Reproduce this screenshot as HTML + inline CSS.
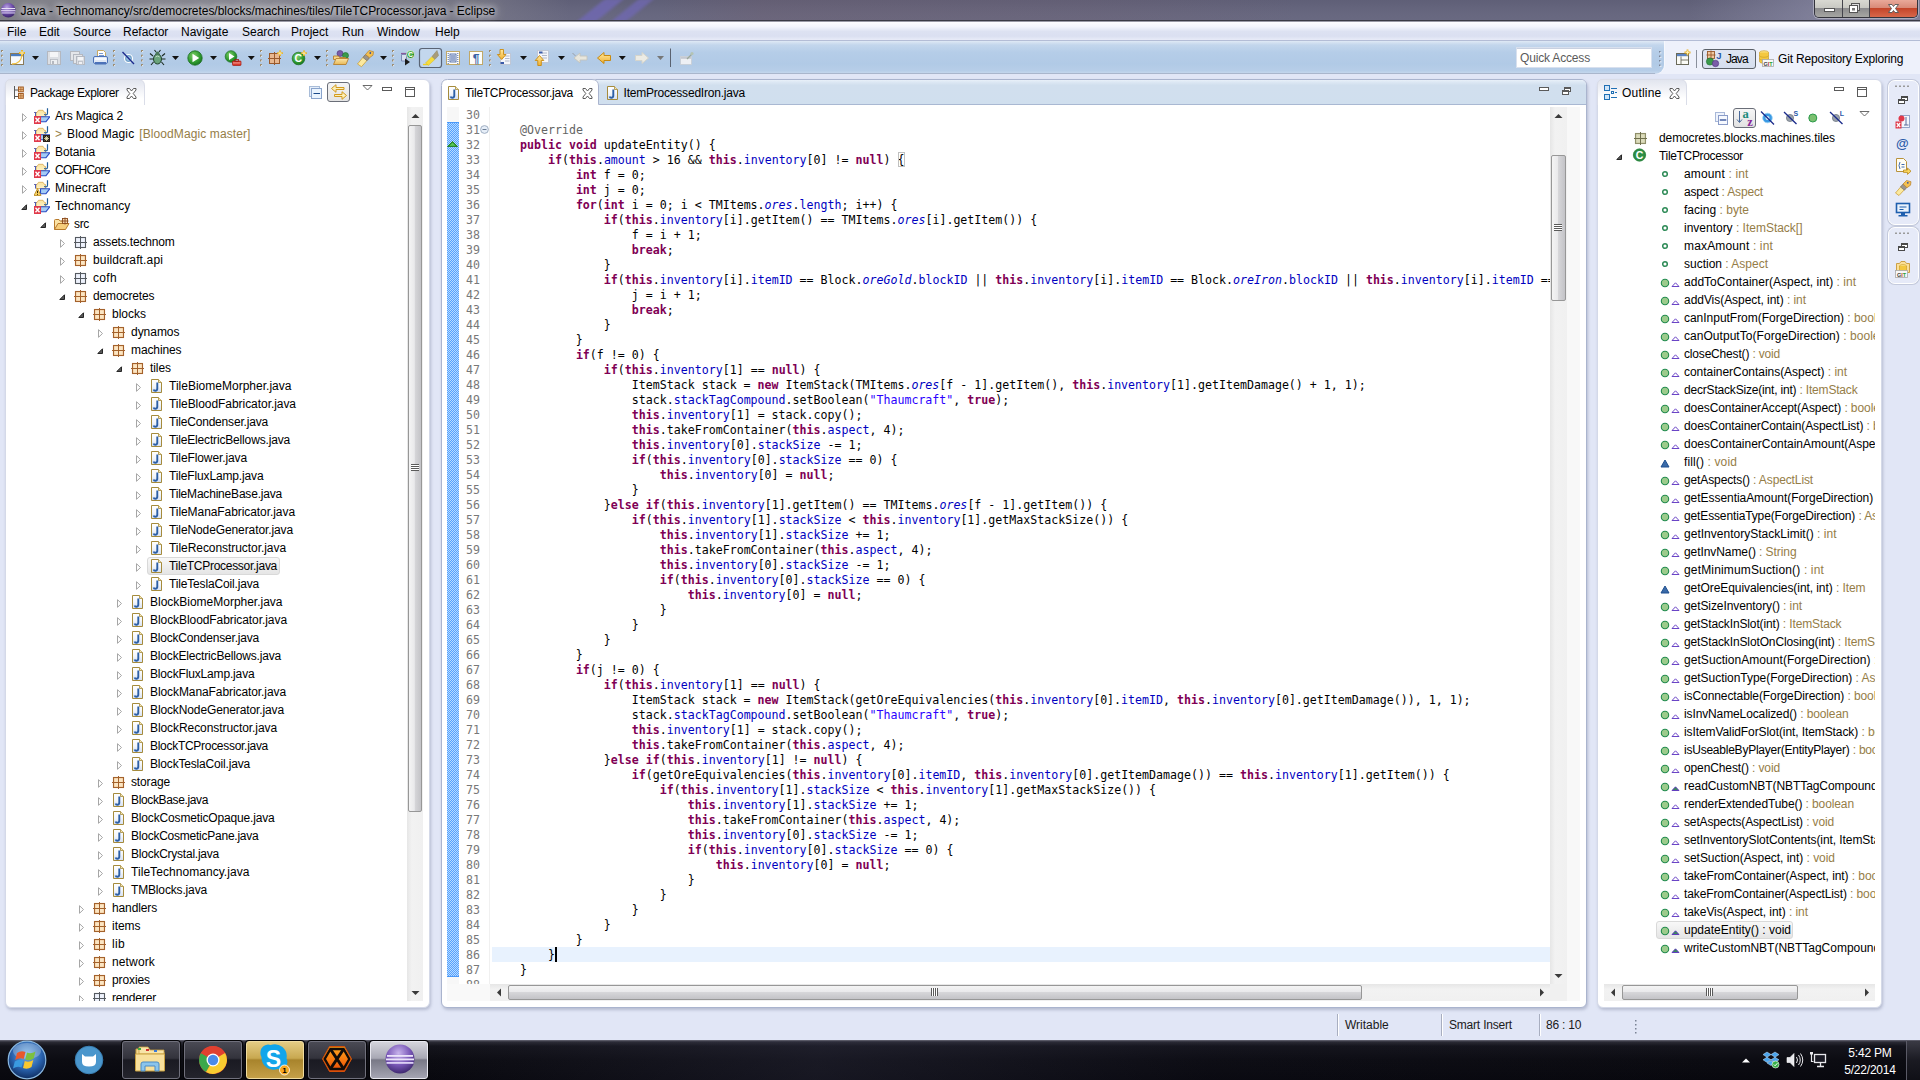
<!DOCTYPE html><html><head><meta charset="utf-8"><title>Java - Eclipse</title><style>
html,body{margin:0;padding:0}
body{width:1920px;height:1080px;overflow:hidden;background:#e1e6f6;font-family:"Liberation Sans",sans-serif;font-size:12px;color:#000;position:relative}
.a{position:absolute}
.t{position:absolute;white-space:nowrap;line-height:18px;height:18px}
.panel{position:absolute;background:#fff;border-radius:6px;box-sizing:border-box;border:1px solid #d4d9e8;box-shadow:1px 2px 3px rgba(125,130,160,.42)}
.clip{position:absolute;overflow:hidden}
.dec{color:#957d47}
.ty{color:#957d47}
.code{position:absolute;white-space:pre;font-family:"DejaVu Sans Mono","Liberation Mono",monospace;font-size:11.627px;line-height:15px;height:15px;color:#000}
.k{color:#7f0055;font-weight:bold}
.f{color:#0000c0}
.sf{color:#0000c0;font-style:italic}
.s{color:#2a00ff}
.an{color:#646464}
.ln{color:#787878}
.sbv{position:absolute;background:linear-gradient(90deg,#e6e6e6,#f2f2f2 30%,#f0f0f0)}
.thv{position:absolute;border:1px solid #979797;border-radius:2px;background:linear-gradient(90deg,#f4f4f4,#e9e9eb 45%,#d6d6d9 50%,#c3c3c7);box-sizing:border-box}
.sbh{position:absolute;background:linear-gradient(180deg,#e6e6e6,#f2f2f2 30%,#f0f0f0)}
.thh{position:absolute;border:1px solid #979797;border-radius:2px;background:linear-gradient(180deg,#f4f4f4,#e9e9eb 45%,#d6d6d9 50%,#c3c3c7);box-sizing:border-box}
.sel{position:absolute;border:1px solid #d9d9d9;border-radius:3px;background:linear-gradient(180deg,#f8f8f8,#e5e5e5);box-sizing:border-box}
</style></head><body>
<svg class="a" style="left:0;top:0" width="0" height="0"><defs><linearGradient id="jf" x1="0" y1="0" x2="0" y2="1"><stop offset="0" stop-color="#fff"/><stop offset=".5" stop-color="#f4f7fc"/><stop offset="1" stop-color="#d4e0f4"/></linearGradient><linearGradient id="tabg" x1="0" y1="0" x2="0" y2="1"><stop offset="0" stop-color="#e1e4ee"/><stop offset=".75" stop-color="#fff"/><stop offset="1" stop-color="#fff"/></linearGradient></defs></svg>
<div class="a" style="left:0;top:0;width:1920px;height:22px;overflow:hidden;background:linear-gradient(90deg,rgba(128,128,136,.95) 0,rgba(140,140,148,.9) 250px,rgba(125,125,138,.6) 480px,rgba(110,110,130,0) 570px),linear-gradient(90deg,rgba(150,150,178,0) 1690px,rgba(150,150,178,.5) 1815px),linear-gradient(90deg,rgba(120,90,100,0) 660px,rgba(120,90,100,.18) 760px,rgba(120,90,100,.12) 1100px,rgba(120,90,100,0) 1300px),linear-gradient(180deg,#5f5f77 0,#66667e 50%,#6a6a82 100%)"><div class="a" style="left:590px;top:-2px;width:19px;height:26px;background:#7068b4;opacity:.8;transform:skewX(-51deg);filter:blur(2px)"></div><div class="a" style="left:624px;top:-2px;width:15px;height:26px;background:#7068b4;opacity:.75;transform:skewX(-51deg);filter:blur(2px)"></div></div>
<div class="a" style="left:0;top:20px;width:1920px;height:1px;background:#3a3a44"></div>
<div class="a" style="left:0;top:21px;width:1920px;height:1px;background:#9a9aa6"></div>
<svg class="a" style="left:0px;top:2px" width="17" height="17" viewBox="0 0 17 17" ><defs><radialGradient id="eg" cx=".4" cy=".3" r=".8"><stop offset="0" stop-color="#b9a3e0"/><stop offset=".5" stop-color="#6b4aa8"/><stop offset="1" stop-color="#2c1a5a"/></radialGradient></defs><circle cx="8.300" cy="8.300" r="7.300" fill="url(#eg)"/><rect x="1.500" y="6" width="13.600" height="1.100" fill="#e8e0f8"/><rect x="1.100" y="8.200" width="14.400" height="1.100" fill="#e8e0f8"/><rect x="1.500" y="10.400" width="13.600" height="1.100" fill="#d8cdf0"/></svg>
<div class="t" style="left:20.500px;top:2px;height:19px;line-height:19px;letter-spacing:-.04px;text-shadow:0 0 6px rgba(255,255,255,.9),0 0 10px rgba(255,255,255,.7),0 0 14px rgba(255,255,255,.5)">Java - Technomancy/src/democretes/blocks/machines/tiles/TileTCProcessor.java - Eclipse</div>
<div class="a" style="left:1814px;top:0;width:104px;height:18px;border:1px solid #33333c;border-top:none;border-radius:0 0 5px 5px;box-sizing:border-box;overflow:hidden;box-shadow:0 0 0 1px rgba(255,255,255,.35)"><div class="a" style="left:0;top:0;width:27px;height:17px;background:linear-gradient(180deg,#d9d9d2 0,#c9c9c3 45%,#8c8c8e 50%,#a6a6a2 100%);border-right:1px solid #44444c"></div><div class="a" style="left:28px;top:0;width:26px;height:17px;background:linear-gradient(180deg,#d9d9d2 0,#c9c9c3 45%,#8c8c8e 50%,#a6a6a2 100%);border-right:1px solid #44444c"></div><div class="a" style="left:55px;top:0;width:48px;height:17px;background:linear-gradient(180deg,#e9a99a 0,#d98a78 45%,#c4452a 50%,#d8674a 100%)"></div></div>
<svg class="a" style="left:1814px;top:0px" width="104" height="18" viewBox="0 0 104 18" ><rect x="10.5" y="8.5" width="10" height="3" fill="#fff" stroke="#555" stroke-width="1"/><rect x="37.500" y="3.5" width="8" height="7" fill="#ddd" stroke="#555" stroke-width="1"/><rect x="35.5" y="5.5" width="8" height="7" fill="#fff" stroke="#555" stroke-width="1"/><rect x="38" y="8" width="3" height="2.500" fill="#777"/><path d="M74.5 4.500 L78 4.500 L79.500 6.500 L81 4.500 L84.500 4.500 L81.500 8.500 L84.500 12.500 L81 12.500 L79.500 10.500 L78 12.500 L74.500 12.500 L77.500 8.500 Z" fill="#fff" stroke="#555" stroke-width=".9"/></svg>
<div class="a" style="left:0;top:22px;width:1920px;height:19px;background:linear-gradient(180deg,#fdfdff 0,#f3f5fc 25%,#dde2f2 50%,#dbe0f1 75%,#eceffa 100%)"></div>
<div class="a" style="left:0;top:40px;width:1920px;height:1px;background:#b4bdd6"></div>
<div class="t" style="left:7px;top:23px">File</div>
<div class="t" style="left:39px;top:23px">Edit</div>
<div class="t" style="left:73px;top:23px">Source</div>
<div class="t" style="left:123px;top:23px">Refactor</div>
<div class="t" style="left:181px;top:23px">Navigate</div>
<div class="t" style="left:242px;top:23px">Search</div>
<div class="t" style="left:291px;top:23px">Project</div>
<div class="t" style="left:342px;top:23px">Run</div>
<div class="t" style="left:377px;top:23px">Window</div>
<div class="t" style="left:435px;top:23px">Help</div>
<div class="a" style="left:0;top:41px;width:1920px;height:37px;background:#eef1fb"></div>
<div class="a" style="left:0;top:41px;width:1664px;height:33px;border-radius:0 0 9px 0;background:linear-gradient(180deg,#dfe9f5 0,#c3d6ec 12%,#b5cde8 35%,#b1cae6 70%,#b7cee8 90%,#c9daee 100%);box-shadow:1px 0 0 #f6f8fd"></div>
<div class="a" style="left:0;top:73px;width:1655px;height:1px;background:#a9b6cc"></div>
<div class="a" style="left:0;top:74px;width:1920px;height:6px;background:#e1e6f6"></div>
<svg class="a" style="left:0px;top:41px" width="720" height="33" viewBox="0 0 720 33" ><g transform="translate(0,-41)"><defs><linearGradient id="gy" x1="0" y1="0" x2="0" y2="1"><stop offset="0" stop-color="#ffe9a0"/><stop offset="1" stop-color="#f0b030"/></linearGradient><radialGradient id="gg" cx=".4" cy=".35" r=".75"><stop offset="0" stop-color="#7fd06a"/><stop offset=".6" stop-color="#2f9a2f"/><stop offset="1" stop-color="#136b1a"/></radialGradient><linearGradient id="gf" x1="0" y1="0" x2="0" y2="1"><stop offset="0" stop-color="#fbe6a8"/><stop offset="1" stop-color="#e8b858"/></linearGradient></defs><rect x="1" y="50.0" width="2" height="2" fill="#9c8a6c"/><rect x="2" y="51.0" width="1.2" height="1.2" fill="#e8edf6"/><rect x="1" y="54.7" width="2" height="2" fill="#9c8a6c"/><rect x="2" y="55.7" width="1.2" height="1.2" fill="#e8edf6"/><rect x="1" y="59.4" width="2" height="2" fill="#9c8a6c"/><rect x="2" y="60.4" width="1.2" height="1.2" fill="#e8edf6"/><rect x="1" y="64.1" width="2" height="2" fill="#9c8a6c"/><rect x="2" y="65.1" width="1.2" height="1.2" fill="#e8edf6"/><rect x="113" y="50.0" width="2" height="2" fill="#9c8a6c"/><rect x="114" y="51.0" width="1.2" height="1.2" fill="#e8edf6"/><rect x="113" y="54.7" width="2" height="2" fill="#9c8a6c"/><rect x="114" y="55.7" width="1.2" height="1.2" fill="#e8edf6"/><rect x="113" y="59.4" width="2" height="2" fill="#9c8a6c"/><rect x="114" y="60.4" width="1.2" height="1.2" fill="#e8edf6"/><rect x="113" y="64.1" width="2" height="2" fill="#9c8a6c"/><rect x="114" y="65.1" width="1.2" height="1.2" fill="#e8edf6"/><rect x="141" y="50.0" width="2" height="2" fill="#9c8a6c"/><rect x="142" y="51.0" width="1.2" height="1.2" fill="#e8edf6"/><rect x="141" y="54.7" width="2" height="2" fill="#9c8a6c"/><rect x="142" y="55.7" width="1.2" height="1.2" fill="#e8edf6"/><rect x="141" y="59.4" width="2" height="2" fill="#9c8a6c"/><rect x="142" y="60.4" width="1.2" height="1.2" fill="#e8edf6"/><rect x="141" y="64.1" width="2" height="2" fill="#9c8a6c"/><rect x="142" y="65.1" width="1.2" height="1.2" fill="#e8edf6"/><rect x="260" y="50.0" width="2" height="2" fill="#9c8a6c"/><rect x="261" y="51.0" width="1.2" height="1.2" fill="#e8edf6"/><rect x="260" y="54.7" width="2" height="2" fill="#9c8a6c"/><rect x="261" y="55.7" width="1.2" height="1.2" fill="#e8edf6"/><rect x="260" y="59.4" width="2" height="2" fill="#9c8a6c"/><rect x="261" y="60.4" width="1.2" height="1.2" fill="#e8edf6"/><rect x="260" y="64.1" width="2" height="2" fill="#9c8a6c"/><rect x="261" y="65.1" width="1.2" height="1.2" fill="#e8edf6"/><rect x="326" y="50.0" width="2" height="2" fill="#9c8a6c"/><rect x="327" y="51.0" width="1.2" height="1.2" fill="#e8edf6"/><rect x="326" y="54.7" width="2" height="2" fill="#9c8a6c"/><rect x="327" y="55.7" width="1.2" height="1.2" fill="#e8edf6"/><rect x="326" y="59.4" width="2" height="2" fill="#9c8a6c"/><rect x="327" y="60.4" width="1.2" height="1.2" fill="#e8edf6"/><rect x="326" y="64.1" width="2" height="2" fill="#9c8a6c"/><rect x="327" y="65.1" width="1.2" height="1.2" fill="#e8edf6"/><rect x="392" y="50.0" width="2" height="2" fill="#9c8a6c"/><rect x="393" y="51.0" width="1.2" height="1.2" fill="#e8edf6"/><rect x="392" y="54.7" width="2" height="2" fill="#9c8a6c"/><rect x="393" y="55.7" width="1.2" height="1.2" fill="#e8edf6"/><rect x="392" y="59.4" width="2" height="2" fill="#9c8a6c"/><rect x="393" y="60.4" width="1.2" height="1.2" fill="#e8edf6"/><rect x="392" y="64.1" width="2" height="2" fill="#9c8a6c"/><rect x="393" y="65.1" width="1.2" height="1.2" fill="#e8edf6"/><rect x="489" y="50.0" width="2" height="2" fill="#9c8a6c"/><rect x="490" y="51.0" width="1.2" height="1.2" fill="#e8edf6"/><rect x="489" y="54.7" width="2" height="2" fill="#9c8a6c"/><rect x="490" y="55.7" width="1.2" height="1.2" fill="#e8edf6"/><rect x="489" y="59.4" width="2" height="2" fill="#9c8a6c"/><rect x="490" y="60.4" width="1.2" height="1.2" fill="#e8edf6"/><rect x="489" y="64.1" width="2" height="2" fill="#9c8a6c"/><rect x="490" y="65.1" width="1.2" height="1.2" fill="#e8edf6"/><path d="M32.0 56 h7 l-3.500 4 Z" fill="#111"/><path d="M172.0 56 h7 l-3.500 4 Z" fill="#111"/><path d="M210.0 56 h7 l-3.500 4 Z" fill="#111"/><path d="M247.8 56 h7 l-3.500 4 Z" fill="#111"/><path d="M314.0 56 h7 l-3.500 4 Z" fill="#111"/><path d="M380.0 56 h7 l-3.500 4 Z" fill="#111"/><path d="M520.0 56 h7 l-3.500 4 Z" fill="#111"/><path d="M558.0 56 h7 l-3.500 4 Z" fill="#111"/><path d="M618.8 56 h7 l-3.500 4 Z" fill="#111"/><path d="M657.0 56 h7 l-3.500 4 Z" fill="#777"/><rect x="10.5" y="53.5" width="13" height="11" fill="#f7fafe" stroke="#8a7a58"/><rect x="11" y="54" width="12" height="2.200" fill="#4a7cc0"/><path d="M12 64 q9 0 10 -9" stroke="#f0c040" stroke-width="1.300" fill="none"/><path d="M22 50 v6 M19 53 h6" stroke="#e8b020" stroke-width="1.800"/><path d="M22 51 v4 M20 53 h4" stroke="#fff6c0" stroke-width=".8"/><rect x="47.5" y="51.5" width="13" height="13" fill="#dcdfe4" stroke="#b4b8c0"/><rect x="50" y="52" width="8" height="5" fill="#f4f5f7"/><rect x="50.5" y="59.5" width="7" height="5" fill="#eceef1" stroke="#b4b8c0" stroke-width=".8"/><rect x="52" y="61" width="2" height="3" fill="#b4b8c0"/><rect x="70.5" y="51.5" width="9" height="9" fill="#e4e6ea" stroke="#b4b8c0"/><rect x="73.500" y="54.5" width="9" height="9" fill="#e4e6ea" stroke="#b4b8c0"/><rect x="76.500" y="56.5" width="8" height="8" fill="#dcdfe4" stroke="#b4b8c0"/><rect x="78" y="57" width="5" height="3" fill="#f4f5f7"/><rect x="78.500" y="61.5" width="4" height="3" fill="#f0f1f4" stroke="#b4b8c0" stroke-width=".7"/><path d="M97.500 50.5 h6 l2 2 v5 h-8 Z" fill="#fdfdfd" stroke="#c8a860"/><path d="M99 53.500 h4 M99 55.500 h5" stroke="#6a8cc8" stroke-width=".9"/><rect x="93.500" y="56.5" width="14" height="7" rx="1.500" fill="#dfe8f6" stroke="#4c72b8"/><rect x="95" y="62" width="11" height="2.500" fill="#4c72b8"/><rect x="95" y="58" width="11" height="2" fill="#f6f9fe"/><circle cx="128.5" cy="58.5" r="4" fill="#6f9fc8" stroke="#fff" stroke-width="1.200"/><circle cx="128.5" cy="58.5" r="2.200" fill="#9cc4e4"/><path d="M122.5 52 L134 64" stroke="#1c2a8c" stroke-width="1.300"/><ellipse cx="157.5" cy="59" rx="4" ry="5" fill="#6aa47c" stroke="#1f4028" stroke-width="1"/><circle cx="157.5" cy="53.500" r="2" fill="#4a7858"/><path d="M153 56 l-3 -2.500 M162 56 l3 -2.500 M153 59 h-3.500 M162 59 h3.500 M153.500 62 l-2.500 3 M161.500 62 l2.500 3 M156 52 l-1.500 -2 M159 52 l1.500 -2" stroke="#1a2a20" stroke-width="1.100" fill="none"/><path d="M155.500 57 q2 -2 4 0" stroke="#cfe8d0" stroke-width=".8" fill="none"/><circle cx="195" cy="58" r="7.200" fill="url(#gg)" stroke="#1a6e22" stroke-width=".8"/><path d="M192.500 53.800 L199.200 58 L192.500 62.200 Z" fill="#fff"/><circle cx="231" cy="56.500" r="5.800" fill="url(#gg)" stroke="#1a6e22" stroke-width=".7"/><path d="M229 53 L234.500 56.500 L229 60 Z" fill="#fff"/><rect x="232.5" y="61" width="8.500" height="4.500" rx=".8" fill="#d8382c" stroke="#a01810" stroke-width=".7"/><rect x="235" y="59.500" width="3.500" height="1.800" fill="none" stroke="#a01810" stroke-width=".8"/><rect x="233" y="62.500" width="7.500" height=".9" fill="#f8b0a8"/><rect x="269.5" y="53.5" width="10" height="10" fill="#e8b890" stroke="#9a5a2c"/><path d="M274.500 52 v13 M268 58.500 h13" stroke="#9a5a2c" stroke-width="1"/><path d="M280 50.500 v5.500 M277.200 53.200 h5.600" stroke="#e8b020" stroke-width="1.800"/><path d="M280 51.500 v3.500 M278.200 53.200 h3.600" stroke="#fff6c0" stroke-width=".8"/><circle cx="298.5" cy="58.5" r="6.300" fill="url(#gg)" stroke="#1a6e22" stroke-width=".7"/><text x="298.300" y="62.400" font-family="Liberation Sans,sans-serif" font-weight="bold" font-size="10.500" fill="#fff" text-anchor="middle">C</text><path d="M304 50.500 v5.500 M301.200 53.200 h5.600" stroke="#e8b020" stroke-width="1.800"/><path d="M304 51.500 v3.500 M302.200 53.200 h3.600" stroke="#fff6c0" stroke-width=".8"/><circle cx="340" cy="53.500" r="3" fill="#7a5ca8" stroke="#4a3478" stroke-width=".6"/><circle cx="345.5" cy="55.500" r="3" fill="#3a9a4a" stroke="#1a6a2a" stroke-width=".6"/><path d="M333.500 56 h5 l1 1.500 h6 v2 h-12 Z" fill="#f4d488" stroke="#b8802c" stroke-width=".9"/><path d="M333.500 64.500 l2.500 -6 h12.500 l-2.500 6 Z" fill="url(#gf)" stroke="#b8802c" stroke-width=".9"/><path d="M357.500 64 l7 -8.500 4 3.200 -7 8 Z" fill="#fbe9a0" stroke="#c89828" stroke-width=".7"/><path d="M363 57.500 l2.500 -3 4 3.200 -2.500 3 Z" fill="#9a948c" stroke="#6a645c" stroke-width=".6"/><path d="M365.500 54.500 l3.500 -4 4.500 1.200 -.5 3.500 -3.500 2.500 Z" fill="#f4c050" stroke="#b8802c" stroke-width=".7"/><circle cx="370.3" cy="53" r=".9" fill="#3050a0"/><path d="M401.500 54.500 h5 v6.500 h-5 Z" fill="#d8dff0" stroke="#6a78a8" stroke-width=".8"/><path d="M401 53.500 h6" stroke="#8a5a9a" stroke-width="1.200"/><circle cx="410.5" cy="54.500" r="4" fill="url(#gg)" stroke="#fff" stroke-width=".7"/><text x="410.500" y="57.200" font-family="Liberation Sans,sans-serif" font-weight="bold" font-size="7" fill="#fff" text-anchor="middle">C</text><path d="M405 58.500 l5 3.500 -5 3.500 Z" fill="#1a1a1a"/><rect x="419.5" y="48.500" width="22" height="19" rx="2.500" fill="#c3d7ee" stroke="#5a6474" stroke-width="1.200"/><path d="M423 64.500 h6" stroke="#f0d020" stroke-width="1.400"/><path d="M425.500 63 l6.500 -6.500 3 2.800 -6.500 6 Z" fill="#f6dc3c" stroke="#d8b820" stroke-width=".5"/><path d="M432 56.500 l5 -6 1.500 5 -3.500 3.800 Z" fill="#a89c78" stroke="#8a8060" stroke-width=".5"/><rect x="446.5" y="51.5" width="13" height="13" fill="#fdfdfb" stroke="#c0a868"/><rect x="450" y="54" width="6" height="8" fill="#e4ecf8" stroke="#3a5a9c" stroke-width=".8"/><path d="M451 56 h4 M451 58 h4 M451 60 h4" stroke="#3a5a9c" stroke-width=".9"/><path d="M448.200 53 v11 M457.800 53 v11" stroke="#3a5a9c" stroke-width=".9" stroke-dasharray="1 1"/><rect x="469.5" y="51.5" width="13" height="13" fill="#fdfdfb" stroke="#c0a868"/><text x="476.200" y="63.300" font-family="Liberation Sans,sans-serif" font-weight="bold" font-size="12" fill="#3a62a8" text-anchor="middle">¶</text><path d="M500.500 53.500 h10 v11 h-10 Z" fill="#f4f6fa" stroke="#b8bcc8" stroke-width=".7"/><path d="M505 56 h4.500 M505 58.500 h4.500 M505 61 h4.500" stroke="#a8b0c4" stroke-width=".9"/><rect x="500.5" y="62" width="3.500" height="2" fill="#3a5aa8"/><path d="M500 49.500 h3.500 v5 h2.500 l-4.300 5 -4.300 -5 h2.600 Z" fill="url(#gy)" stroke="#c88a10" stroke-width=".9"/><path d="M537.500 50.500 h11 v12 h-11 Z" fill="#f4f6fa" stroke="#b8bcc8" stroke-width=".7"/><path d="M542 53 h5 M542 55.500 h5 M542 58 h5" stroke="#a8b0c4" stroke-width=".9"/><rect x="539" y="51.500" width="3.500" height="2" fill="#3a5aa8"/><path d="M537.800 65.500 h3.500 v-5 h2.500 l-4.300 -5 -4.300 5 h2.600 Z" fill="url(#gy)" stroke="#c88a10" stroke-width=".9"/><path d="M574 58 l6 -5 v3 h7 v4 h-7 v3 Z" fill="#e8e6dc" stroke="#c4c4bc" stroke-width=".9"/><path d="M572.500 53 l3 3" stroke="#9aa0a8" stroke-width="1"/><path d="M597.500 58 l6.500 -5.500 v3 h6.500 v5 h-6.500 v3 Z" fill="url(#gy)" stroke="#c88a10" stroke-width="1"/><path d="M648.500 58 l-6.500 -5.500 v3 h-6.500 v5 h6.500 v3 Z" fill="#ecebe4" stroke="#d4d4cc" stroke-width="1"/><rect x="670" y="48.500" width="1" height="18.500" fill="#5a6270"/><rect x="680.5" y="56.500" width="11" height="8" fill="#eef0f4" stroke="#c8ccd4" stroke-width=".8"/><rect x="681" y="57" width="10" height="1.800" fill="#c4c8d0"/><path d="M687 59 l5 -5" stroke="#9aa89a" stroke-width="1.300"/><circle cx="692" cy="53.500" r="1.600" fill="#b4c4b4"/></g></svg>
<div class="a" style="left:1516px;top:47px;width:136px;height:21px;background:#fff;border:1px solid #d8e0ee;box-sizing:border-box;box-shadow:inset 0 1px 0 #c8d0e0"></div>
<div class="t" style="left:1520px;top:49px;color:#5a5a5a;line-height:19px;height:19px;letter-spacing:-.17px">Quick Access</div>
<svg class="a" style="left:1655px;top:41px" width="12" height="33" viewBox="0 0 12 33" ><rect x="4" y="10" width="1.500" height="1.500" fill="#7a8294"/><rect x="5.200" y="11.2" width="1.200" height="1.200" fill="#f4f6fc"/><rect x="4" y="14.5" width="1.500" height="1.500" fill="#7a8294"/><rect x="5.200" y="15.7" width="1.200" height="1.200" fill="#f4f6fc"/><rect x="4" y="19" width="1.500" height="1.500" fill="#7a8294"/><rect x="5.200" y="20.2" width="1.200" height="1.200" fill="#f4f6fc"/><rect x="4" y="23.5" width="1.500" height="1.500" fill="#7a8294"/><rect x="5.200" y="24.7" width="1.200" height="1.200" fill="#f4f6fc"/></svg>
<svg class="a" style="left:1675px;top:49px" width="18" height="18" viewBox="0 0 18 18" ><rect x="1.500" y="4.500" width="12" height="11" fill="#fbfbf6" stroke="#6a6a5a"/><rect x="2" y="5" width="11" height="2.200" fill="#5a84c4"/><path d="M6 7.500 v8 M6 11 h7.500" stroke="#6a6a5a" stroke-width=".9"/><path d="M12.500 0.500 v6 M9.500 3.500 h6" stroke="#e8b020" stroke-width="1.800"/><path d="M12.500 1.500 v4 M10.500 3.500 h4" stroke="#fff6c0" stroke-width=".8"/></svg>
<div class="a" style="left:1696px;top:50px;width:1px;height:18px;background:#8a909c"></div>
<div class="a" style="left:1702px;top:49px;width:54px;height:20px;border:1px solid #5a6068;border-radius:3px;box-sizing:border-box;background:linear-gradient(180deg,#dfe5f2,#d6deee)"></div>
<svg class="a" style="left:1705px;top:50px" width="18" height="18" viewBox="0 0 18 18" ><rect x="2.500" y="1.500" width="7" height="7" fill="#f0c8a0" stroke="#9a5a2c" stroke-width=".9"/><path d="M6 0.500 v9 M1.500 5 h9" stroke="#9a5a2c" stroke-width=".9"/><circle cx="5" cy="11.500" r="3.600" fill="#3a9a4a" stroke="#1a6a2a" stroke-width=".6"/><circle cx="10.500" cy="13.500" r="3.200" fill="#7a5ca8" stroke="#4a3478" stroke-width=".6"/><text x="13.800" y="8.500" font-family="Liberation Sans,sans-serif" font-weight="bold" font-size="9.500" fill="#2a5aa8" text-anchor="middle">J</text></svg>
<div class="t" style="left:1726px;top:50px;letter-spacing:-.9px">Java</div>
<svg class="a" style="left:1757px;top:49px" width="18" height="20" viewBox="0 0 18 20" ><ellipse cx="7" cy="3.500" rx="4.500" ry="1.800" fill="#fbe080" stroke="#c89820" stroke-width=".6"/><path d="M2.500 3.500 v9 a4.500 1.800 0 0 0 9 0 v-9" fill="#f4c840" stroke="#c89820" stroke-width=".6"/><path d="M2.500 6.500 a4.500 1.800 0 0 0 9 0 M2.500 9.500 a4.500 1.800 0 0 0 9 0" fill="none" stroke="#c89820" stroke-width=".6"/><rect x="5.500" y="10.500" width="11" height="7" fill="#f8f8f8" stroke="#a8a8a8" stroke-width=".8"/><text x="11" y="16.500" font-family="Liberation Sans,sans-serif" font-weight="bold" font-size="5.500" text-anchor="middle"><tspan fill="#404040">G</tspan><tspan fill="#c03030">I</tspan><tspan fill="#30a030">T</tspan></text></svg>
<div class="t" style="left:1778px;top:50px;letter-spacing:-.17px">Git Repository Exploring</div>
<div class="panel" style="left:5px;top:79px;width:425px;height:929px"></div>
<svg class="a" style="left:5px;top:79px" width="150" height="26" viewBox="0 0 150 26" ><path d="M0.500 26 V6 Q0.500 0.500 6 0.500 H133 Q139.500 0.500 139.500 7 V26" fill="url(#tabg)" stroke="#dadde8" stroke-width="1"/></svg>
<svg class="a" style="left:13px;top:84px" width="16" height="16" viewBox="0 0 16 16" ><path d="M1.500 2 v13 M1.500 6 h4 M1.500 12.500 h4" stroke="#5a5a5a" stroke-width="1" fill="none"/><rect x="5.500" y="3" width="4.800" height="4.800" fill="#f4c890" stroke="#a05a24" stroke-width="1"/><path d="M7.900 3 v4.800 M5.500 5.400 h4.800" stroke="#a05a24" stroke-width=".7"/><rect x="5.500" y="9.500" width="4.800" height="4.800" fill="#f4c890" stroke="#a05a24" stroke-width="1"/><path d="M7.900 9.500 v4.800 M5.500 11.900 h4.800" stroke="#a05a24" stroke-width=".7"/></svg>
<div class="t" style="left:30px;top:84px;letter-spacing:-.38px">Package Explorer</div>
<svg class="a" style="left:126px;top:88px" width="11" height="11" viewBox="0 0 11 11" ><path d="M1 0.500 h2.500 l2 2.500 l2 -2.500 h2.500 v1.500 l-2.800 3.500 l2.800 3.500 v1.500 h-2.500 l-2 -2.500 l-2 2.500 h-2.500 v-1.500 l2.800 -3.500 l-2.800 -3.500 Z" fill="#fff" stroke="#4a4a4a" stroke-width=".9"/></svg>
<svg class="a" style="left:306px;top:85px" width="18" height="16" viewBox="0 0 18 16" ><rect x="3.500" y="1.500" width="10" height="10" fill="#e4eefa" stroke="#a8bcd8" stroke-width="1"/><rect x="5.500" y="3.500" width="10" height="10" fill="#eaf4fe" stroke="#8aa4cc" stroke-width="1"/><path d="M7.500 8.500 h6.500" stroke="#1a4a8a" stroke-width="1"/></svg>
<div class="a" style="left:327px;top:82px;width:23px;height:20px;border:1px solid #6a6e78;border-radius:3px;box-sizing:border-box;background:linear-gradient(180deg,#f4f4f4,#e4e4e4)"></div>
<svg class="a" style="left:330px;top:83px" width="18" height="18" viewBox="0 0 18 18" ><path d="M1.500 5.500 l4.500 -3.800 v2.800 h8 v2 h-8 v2.800 Z" fill="#fdf0b8" stroke="#d29a1e" stroke-width="1" stroke-linejoin="round"/><path d="M16.500 12.500 l-4.500 -3.800 v2.800 h-7.500 v2 h7.500 v2.800 Z" fill="#fdf0b8" stroke="#d29a1e" stroke-width="1" stroke-linejoin="round"/></svg>
<svg class="a" style="left:361.5px;top:83.5px" width="12" height="8" viewBox="0 0 12 8" ><path d="M1 1.500 h9 l-4.500 4.500 Z" fill="#fff" stroke="#5a5a5a" stroke-width=".9"/></svg>
<svg class="a" style="left:382px;top:87px" width="12" height="6" viewBox="0 0 12 6" ><rect x="0.500" y="0.500" width="9" height="3" fill="#fff" stroke="#5a5a5a" stroke-width="1"/></svg>
<svg class="a" style="left:405px;top:87px" width="12" height="12" viewBox="0 0 12 12" ><rect x="0.500" y="0.500" width="9" height="9" fill="#fff" stroke="#5a5a5a" stroke-width="1"/><path d="M0.500 2.500 h9" stroke="#5a5a5a" stroke-width="1"/></svg>
<div class="clip" style="left:12px;top:107px;width:394px;height:894px">
<svg class="a" style="left:10px;top:6px" width="6" height="10" viewBox="0 0 6 10" ><path d="M0.500 0.700 V8.300 L4.500 4.500 Z" fill="#fff" stroke="#a6a6a6" stroke-width="1" stroke-linejoin="round"/></svg>
<svg class="a" style="left:22px;top:1px" width="16" height="16" viewBox="0 0 16 16" ><path d="M2 4.500 h1 l1.500 -2.200 h4.500 l1.500 2.200 h1 v4 h-9.500 Z" fill="#fbe7a8" stroke="#d8a850" stroke-width=".8"/><path d="M3 6 h8 M3 7.500 h8" stroke="#fdf3cf" stroke-width=".7"/><path d="M0 4.500 h2.500" stroke="#6a6aa8" stroke-width="1"/><path d="M1.500 4.500 v4" stroke="#4a5ab8" stroke-width="1"/><path d="M6.500 8.700 H16 L12 13.700 H6.500 Z" fill="#a4ccf6" stroke="#2a4cc4" stroke-width="1.100" stroke-linejoin="round"/><path d="M13.500 0.300 v5 q0 1.700 -1.700 1.700 q-1 0 -1.300 -1" fill="none" stroke="#1f5c99" stroke-width="1.200"/><rect x="0" y="8" width="7" height="8" fill="#e0394a"/><path d="M1.500 9.800 l4 4.500 M5.500 9.800 l-4 4.500" stroke="#fff" stroke-width="1.400"/></svg>
<div class="t" style="left:43px;top:0px;letter-spacing:-0.169px;">Ars Magica 2</div>
<svg class="a" style="left:10px;top:24px" width="6" height="10" viewBox="0 0 6 10" ><path d="M0.500 0.700 V8.300 L4.500 4.500 Z" fill="#fff" stroke="#a6a6a6" stroke-width="1" stroke-linejoin="round"/></svg>
<svg class="a" style="left:22px;top:19px" width="16" height="16" viewBox="0 0 16 16" ><path d="M2 4.500 h1 l1.500 -2.200 h4.500 l1.500 2.200 h1 v4 h-9.500 Z" fill="#fbe7a8" stroke="#d8a850" stroke-width=".8"/><path d="M3 6 h8 M3 7.500 h8" stroke="#fdf3cf" stroke-width=".7"/><path d="M0 4.500 h2.500" stroke="#6a6aa8" stroke-width="1"/><path d="M1.500 4.500 v4" stroke="#4a5ab8" stroke-width="1"/><path d="M6.500 8.700 H16 L12 13.700 H6.500 Z" fill="#a4ccf6" stroke="#2a4cc4" stroke-width="1.100" stroke-linejoin="round"/><path d="M13.500 0.300 v5 q0 1.700 -1.700 1.700 q-1 0 -1.300 -1" fill="none" stroke="#1f5c99" stroke-width="1.200"/><rect x="0" y="8" width="7" height="8" fill="#e0394a"/><path d="M1.500 9.800 l4 4.500 M5.500 9.800 l-4 4.500" stroke="#fff" stroke-width="1.400"/><rect x="9" y="9" width="7" height="7" fill="#2a2018"/><path d="M12.500 10 v5 M10 12.500 h5 M10.700 10.700 l3.600 3.600 M14.300 10.700 l-3.600 3.600" stroke="#fbf6c0" stroke-width=".75"/></svg>
<div class="t" style="left:43px;top:18px;letter-spacing:0.099px;"><span class="dec">&gt;</span><span style="display:inline-block;width:5px"></span>Blood Magic<span style="display:inline-block;width:5px"></span><span class="dec">[BloodMagic master]</span></div>
<svg class="a" style="left:10px;top:42px" width="6" height="10" viewBox="0 0 6 10" ><path d="M0.500 0.700 V8.300 L4.500 4.500 Z" fill="#fff" stroke="#a6a6a6" stroke-width="1" stroke-linejoin="round"/></svg>
<svg class="a" style="left:22px;top:37px" width="16" height="16" viewBox="0 0 16 16" ><path d="M2 4.500 h1 l1.500 -2.200 h4.500 l1.500 2.200 h1 v4 h-9.500 Z" fill="#fbe7a8" stroke="#d8a850" stroke-width=".8"/><path d="M3 6 h8 M3 7.500 h8" stroke="#fdf3cf" stroke-width=".7"/><path d="M0 4.500 h2.500" stroke="#6a6aa8" stroke-width="1"/><path d="M1.500 4.500 v4" stroke="#4a5ab8" stroke-width="1"/><path d="M6.500 8.700 H16 L12 13.700 H6.500 Z" fill="#a4ccf6" stroke="#2a4cc4" stroke-width="1.100" stroke-linejoin="round"/><path d="M13.500 0.300 v5 q0 1.700 -1.700 1.700 q-1 0 -1.300 -1" fill="none" stroke="#1f5c99" stroke-width="1.200"/><rect x="0" y="8" width="7" height="8" fill="#e0394a"/><path d="M1.500 9.800 l4 4.500 M5.500 9.800 l-4 4.500" stroke="#fff" stroke-width="1.400"/></svg>
<div class="t" style="left:43px;top:36px;letter-spacing:-0.100px;">Botania</div>
<svg class="a" style="left:10px;top:60px" width="6" height="10" viewBox="0 0 6 10" ><path d="M0.500 0.700 V8.300 L4.500 4.500 Z" fill="#fff" stroke="#a6a6a6" stroke-width="1" stroke-linejoin="round"/></svg>
<svg class="a" style="left:22px;top:55px" width="16" height="16" viewBox="0 0 16 16" ><path d="M2 4.500 h1 l1.500 -2.200 h4.500 l1.500 2.200 h1 v4 h-9.500 Z" fill="#fbe7a8" stroke="#d8a850" stroke-width=".8"/><path d="M3 6 h8 M3 7.500 h8" stroke="#fdf3cf" stroke-width=".7"/><path d="M0 4.500 h2.500" stroke="#6a6aa8" stroke-width="1"/><path d="M1.500 4.500 v4" stroke="#4a5ab8" stroke-width="1"/><path d="M6.500 8.700 H16 L12 13.700 H6.500 Z" fill="#a4ccf6" stroke="#2a4cc4" stroke-width="1.100" stroke-linejoin="round"/><path d="M13.500 0.300 v5 q0 1.700 -1.700 1.700 q-1 0 -1.300 -1" fill="none" stroke="#1f5c99" stroke-width="1.200"/><rect x="0" y="8" width="7" height="8" fill="#e0394a"/><path d="M1.500 9.800 l4 4.500 M5.500 9.800 l-4 4.500" stroke="#fff" stroke-width="1.400"/></svg>
<div class="t" style="left:43px;top:54px;letter-spacing:-0.627px;">COFHCore</div>
<svg class="a" style="left:10px;top:78px" width="6" height="10" viewBox="0 0 6 10" ><path d="M0.500 0.700 V8.300 L4.500 4.500 Z" fill="#fff" stroke="#a6a6a6" stroke-width="1" stroke-linejoin="round"/></svg>
<svg class="a" style="left:22px;top:73px" width="16" height="16" viewBox="0 0 16 16" ><path d="M2 4.500 h1 l1.500 -2.200 h4.500 l1.500 2.200 h1 v4 h-9.500 Z" fill="#fbe7a8" stroke="#d8a850" stroke-width=".8"/><path d="M3 6 h8 M3 7.500 h8" stroke="#fdf3cf" stroke-width=".7"/><path d="M0 4.500 h2.500" stroke="#6a6aa8" stroke-width="1"/><path d="M1.500 4.500 v4" stroke="#4a5ab8" stroke-width="1"/><path d="M6.500 8.700 H16 L12 13.700 H6.500 Z" fill="#a4ccf6" stroke="#2a4cc4" stroke-width="1.100" stroke-linejoin="round"/><path d="M13.500 0.300 v5 q0 1.700 -1.700 1.700 q-1 0 -1.300 -1" fill="none" stroke="#1f5c99" stroke-width="1.200"/><path d="M3.500 8.500 L7 15.500 H0 Z" fill="#f8d060" stroke="#b8861c" stroke-width=".8" stroke-linejoin="round"/><path d="M3.500 10.800 v2.400 M3.500 14 v.8" stroke="#3a2a00" stroke-width="1"/></svg>
<div class="t" style="left:43px;top:72px;letter-spacing:0.182px;">Minecraft</div>
<svg class="a" style="left:9px;top:97px" width="7" height="7" viewBox="0 0 7 7" ><path d="M5.500 0.800 V5.500 H0.800 Z" fill="#595959" stroke="#262626" stroke-width="1" stroke-linejoin="round"/></svg>
<svg class="a" style="left:22px;top:91px" width="16" height="16" viewBox="0 0 16 16" ><path d="M2 4.500 h1 l1.500 -2.200 h4.500 l1.500 2.200 h1 v4 h-9.500 Z" fill="#fbe7a8" stroke="#d8a850" stroke-width=".8"/><path d="M3 6 h8 M3 7.500 h8" stroke="#fdf3cf" stroke-width=".7"/><path d="M0 4.500 h2.500" stroke="#6a6aa8" stroke-width="1"/><path d="M1.500 4.500 v4" stroke="#4a5ab8" stroke-width="1"/><path d="M6.500 8.700 H16 L12 13.700 H6.500 Z" fill="#a4ccf6" stroke="#2a4cc4" stroke-width="1.100" stroke-linejoin="round"/><path d="M13.500 0.300 v5 q0 1.700 -1.700 1.700 q-1 0 -1.300 -1" fill="none" stroke="#1f5c99" stroke-width="1.200"/><rect x="0" y="8" width="7" height="8" fill="#e0394a"/><path d="M1.500 9.800 l4 4.500 M5.500 9.800 l-4 4.500" stroke="#fff" stroke-width="1.400"/></svg>
<div class="t" style="left:43px;top:90px;letter-spacing:0.132px;">Technomancy</div>
<svg class="a" style="left:28px;top:115px" width="7" height="7" viewBox="0 0 7 7" ><path d="M5.500 0.800 V5.500 H0.800 Z" fill="#595959" stroke="#262626" stroke-width="1" stroke-linejoin="round"/></svg>
<svg class="a" style="left:42px;top:109px" width="16" height="16" viewBox="0 0 16 16" ><path d="M0.500 13.500 V4.500 Q0.500 3.500 1.500 3.500 H5 L6 5 H12 V7" fill="#fbe3a6" stroke="#b87a2c" stroke-width="1"/><path d="M0.500 13.500 L4 7.500 H15 L11.500 13.500 Z" fill="#f6cd7c" stroke="#b87a2c" stroke-width="1" stroke-linejoin="round"/><rect x="8.500" y="2.500" width="5" height="5" fill="#f8d8b0" stroke="#8a4a1c" stroke-width=".9"/><path d="M11 1.500 v7 M7.500 5 h7" stroke="#8a4a1c" stroke-width=".9"/></svg>
<div class="t" style="left:62px;top:108px;letter-spacing:-0.333px;">src</div>
<svg class="a" style="left:48px;top:132px" width="6" height="10" viewBox="0 0 6 10" ><path d="M0.500 0.700 V8.300 L4.500 4.500 Z" fill="#fff" stroke="#a6a6a6" stroke-width="1" stroke-linejoin="round"/></svg>
<svg class="a" style="left:62px;top:127px" width="14" height="16" viewBox="0 0 14 16" ><rect x="1.500" y="3.500" width="10" height="10" fill="#eef2fc" stroke="#555a60" stroke-width="1.100"/><path d="M6.500 2 v13 M0 8.500 h13" stroke="#555a60" stroke-width="1"/></svg>
<div class="t" style="left:81px;top:126px;letter-spacing:-0.182px;">assets.technom</div>
<svg class="a" style="left:48px;top:150px" width="6" height="10" viewBox="0 0 6 10" ><path d="M0.500 0.700 V8.300 L4.500 4.500 Z" fill="#fff" stroke="#a6a6a6" stroke-width="1" stroke-linejoin="round"/></svg>
<svg class="a" style="left:62px;top:145px" width="14" height="16" viewBox="0 0 14 16" ><rect x="1.500" y="3.500" width="10" height="10" fill="#f4cfa0" stroke="#a4622c" stroke-width="1.100"/><rect x="2.500" y="4.500" width="3.500" height="3.500" fill="#fbe6c4"/><rect x="7" y="4.500" width="3.500" height="3.500" fill="#fbe6c4"/><rect x="2.500" y="9" width="3.500" height="3.500" fill="#fbe6c4"/><rect x="7" y="9" width="3.500" height="3.500" fill="#fbe6c4"/><path d="M6.500 2 v13 M0 8.500 h13" stroke="#a4622c" stroke-width="1"/></svg>
<div class="t" style="left:81px;top:144px;letter-spacing:0.140px;">buildcraft.api</div>
<svg class="a" style="left:48px;top:168px" width="6" height="10" viewBox="0 0 6 10" ><path d="M0.500 0.700 V8.300 L4.500 4.500 Z" fill="#fff" stroke="#a6a6a6" stroke-width="1" stroke-linejoin="round"/></svg>
<svg class="a" style="left:62px;top:163px" width="14" height="16" viewBox="0 0 14 16" ><rect x="1.500" y="3.500" width="10" height="10" fill="#eef2fc" stroke="#555a60" stroke-width="1.100"/><path d="M6.500 2 v13 M0 8.500 h13" stroke="#555a60" stroke-width="1"/></svg>
<div class="t" style="left:81px;top:162px;letter-spacing:0.328px;">cofh</div>
<svg class="a" style="left:47px;top:187px" width="7" height="7" viewBox="0 0 7 7" ><path d="M5.500 0.800 V5.500 H0.800 Z" fill="#595959" stroke="#262626" stroke-width="1" stroke-linejoin="round"/></svg>
<svg class="a" style="left:62px;top:181px" width="14" height="16" viewBox="0 0 14 16" ><rect x="1.500" y="3.500" width="10" height="10" fill="#f4cfa0" stroke="#a4622c" stroke-width="1.100"/><rect x="2.500" y="4.500" width="3.500" height="3.500" fill="#fbe6c4"/><rect x="7" y="4.500" width="3.500" height="3.500" fill="#fbe6c4"/><rect x="2.500" y="9" width="3.500" height="3.500" fill="#fbe6c4"/><rect x="7" y="9" width="3.500" height="3.500" fill="#fbe6c4"/><path d="M6.500 2 v13 M0 8.500 h13" stroke="#a4622c" stroke-width="1"/></svg>
<div class="t" style="left:81px;top:180px;letter-spacing:-0.120px;">democretes</div>
<svg class="a" style="left:66px;top:205px" width="7" height="7" viewBox="0 0 7 7" ><path d="M5.500 0.800 V5.500 H0.800 Z" fill="#595959" stroke="#262626" stroke-width="1" stroke-linejoin="round"/></svg>
<svg class="a" style="left:81px;top:199px" width="14" height="16" viewBox="0 0 14 16" ><rect x="1.500" y="3.500" width="10" height="10" fill="#f4cfa0" stroke="#a4622c" stroke-width="1.100"/><rect x="2.500" y="4.500" width="3.500" height="3.500" fill="#fbe6c4"/><rect x="7" y="4.500" width="3.500" height="3.500" fill="#fbe6c4"/><rect x="2.500" y="9" width="3.500" height="3.500" fill="#fbe6c4"/><rect x="7" y="9" width="3.500" height="3.500" fill="#fbe6c4"/><path d="M6.500 2 v13 M0 8.500 h13" stroke="#a4622c" stroke-width="1"/></svg>
<div class="t" style="left:100px;top:198px;letter-spacing:-0.003px;">blocks</div>
<svg class="a" style="left:86px;top:222px" width="6" height="10" viewBox="0 0 6 10" ><path d="M0.500 0.700 V8.300 L4.500 4.500 Z" fill="#fff" stroke="#a6a6a6" stroke-width="1" stroke-linejoin="round"/></svg>
<svg class="a" style="left:100px;top:217px" width="14" height="16" viewBox="0 0 14 16" ><rect x="1.500" y="3.500" width="10" height="10" fill="#f4cfa0" stroke="#a4622c" stroke-width="1.100"/><rect x="2.500" y="4.500" width="3.500" height="3.500" fill="#fbe6c4"/><rect x="7" y="4.500" width="3.500" height="3.500" fill="#fbe6c4"/><rect x="2.500" y="9" width="3.500" height="3.500" fill="#fbe6c4"/><rect x="7" y="9" width="3.500" height="3.500" fill="#fbe6c4"/><path d="M6.500 2 v13 M0 8.500 h13" stroke="#a4622c" stroke-width="1"/></svg>
<div class="t" style="left:119px;top:216px;letter-spacing:-0.029px;">dynamos</div>
<svg class="a" style="left:85px;top:241px" width="7" height="7" viewBox="0 0 7 7" ><path d="M5.500 0.800 V5.500 H0.800 Z" fill="#595959" stroke="#262626" stroke-width="1" stroke-linejoin="round"/></svg>
<svg class="a" style="left:100px;top:235px" width="14" height="16" viewBox="0 0 14 16" ><rect x="1.500" y="3.500" width="10" height="10" fill="#f4cfa0" stroke="#a4622c" stroke-width="1.100"/><rect x="2.500" y="4.500" width="3.500" height="3.500" fill="#fbe6c4"/><rect x="7" y="4.500" width="3.500" height="3.500" fill="#fbe6c4"/><rect x="2.500" y="9" width="3.500" height="3.500" fill="#fbe6c4"/><rect x="7" y="9" width="3.500" height="3.500" fill="#fbe6c4"/><path d="M6.500 2 v13 M0 8.500 h13" stroke="#a4622c" stroke-width="1"/></svg>
<div class="t" style="left:119px;top:234px;letter-spacing:-0.107px;">machines</div>
<svg class="a" style="left:104px;top:259px" width="7" height="7" viewBox="0 0 7 7" ><path d="M5.500 0.800 V5.500 H0.800 Z" fill="#595959" stroke="#262626" stroke-width="1" stroke-linejoin="round"/></svg>
<svg class="a" style="left:119px;top:253px" width="14" height="16" viewBox="0 0 14 16" ><rect x="1.500" y="3.500" width="10" height="10" fill="#f4cfa0" stroke="#a4622c" stroke-width="1.100"/><rect x="2.500" y="4.500" width="3.500" height="3.500" fill="#fbe6c4"/><rect x="7" y="4.500" width="3.500" height="3.500" fill="#fbe6c4"/><rect x="2.500" y="9" width="3.500" height="3.500" fill="#fbe6c4"/><rect x="7" y="9" width="3.500" height="3.500" fill="#fbe6c4"/><path d="M6.500 2 v13 M0 8.500 h13" stroke="#a4622c" stroke-width="1"/></svg>
<div class="t" style="left:138px;top:252px;letter-spacing:-0.069px;">tiles</div>
<svg class="a" style="left:124px;top:276px" width="6" height="10" viewBox="0 0 6 10" ><path d="M0.500 0.700 V8.300 L4.500 4.500 Z" fill="#fff" stroke="#a6a6a6" stroke-width="1" stroke-linejoin="round"/></svg>
<svg class="a" style="left:137px;top:271px" width="16" height="16" viewBox="0 0 16 16" ><path d="M2.500 1.500 H9.500 L12.500 4.500 V14.500 H2.500 Z" fill="url(#jf)" stroke="#a58b3c" stroke-width="1"/><path d="M9.500 1.500 V4.500 H12.500" fill="#f4e6b4" stroke="#a58b3c" stroke-width=".8"/><path d="M8.300 4.500 v6 q0 2.200 -2 2.200 q-1.300 0 -1.700 -1.200" fill="none" stroke="#2c5fa6" stroke-width="1.900"/></svg>
<div class="t" style="left:157px;top:270px;letter-spacing:0.010px;">TileBiomeMorpher.java</div>
<svg class="a" style="left:124px;top:294px" width="6" height="10" viewBox="0 0 6 10" ><path d="M0.500 0.700 V8.300 L4.500 4.500 Z" fill="#fff" stroke="#a6a6a6" stroke-width="1" stroke-linejoin="round"/></svg>
<svg class="a" style="left:137px;top:289px" width="16" height="16" viewBox="0 0 16 16" ><path d="M2.500 1.500 H9.500 L12.500 4.500 V14.500 H2.500 Z" fill="url(#jf)" stroke="#a58b3c" stroke-width="1"/><path d="M9.500 1.500 V4.500 H12.500" fill="#f4e6b4" stroke="#a58b3c" stroke-width=".8"/><path d="M8.300 4.500 v6 q0 2.200 -2 2.200 q-1.300 0 -1.700 -1.200" fill="none" stroke="#2c5fa6" stroke-width="1.900"/></svg>
<div class="t" style="left:157px;top:288px;letter-spacing:-0.054px;">TileBloodFabricator.java</div>
<svg class="a" style="left:124px;top:312px" width="6" height="10" viewBox="0 0 6 10" ><path d="M0.500 0.700 V8.300 L4.500 4.500 Z" fill="#fff" stroke="#a6a6a6" stroke-width="1" stroke-linejoin="round"/></svg>
<svg class="a" style="left:137px;top:307px" width="16" height="16" viewBox="0 0 16 16" ><path d="M2.500 1.500 H9.500 L12.500 4.500 V14.500 H2.500 Z" fill="url(#jf)" stroke="#a58b3c" stroke-width="1"/><path d="M9.500 1.500 V4.500 H12.500" fill="#f4e6b4" stroke="#a58b3c" stroke-width=".8"/><path d="M8.300 4.500 v6 q0 2.200 -2 2.200 q-1.300 0 -1.700 -1.200" fill="none" stroke="#2c5fa6" stroke-width="1.900"/></svg>
<div class="t" style="left:157px;top:306px;letter-spacing:-0.182px;">TileCondenser.java</div>
<svg class="a" style="left:124px;top:330px" width="6" height="10" viewBox="0 0 6 10" ><path d="M0.500 0.700 V8.300 L4.500 4.500 Z" fill="#fff" stroke="#a6a6a6" stroke-width="1" stroke-linejoin="round"/></svg>
<svg class="a" style="left:137px;top:325px" width="16" height="16" viewBox="0 0 16 16" ><path d="M2.500 1.500 H9.500 L12.500 4.500 V14.500 H2.500 Z" fill="url(#jf)" stroke="#a58b3c" stroke-width="1"/><path d="M9.500 1.500 V4.500 H12.500" fill="#f4e6b4" stroke="#a58b3c" stroke-width=".8"/><path d="M8.300 4.500 v6 q0 2.200 -2 2.200 q-1.300 0 -1.700 -1.200" fill="none" stroke="#2c5fa6" stroke-width="1.900"/></svg>
<div class="t" style="left:157px;top:324px;letter-spacing:-0.164px;">TileElectricBellows.java</div>
<svg class="a" style="left:124px;top:348px" width="6" height="10" viewBox="0 0 6 10" ><path d="M0.500 0.700 V8.300 L4.500 4.500 Z" fill="#fff" stroke="#a6a6a6" stroke-width="1" stroke-linejoin="round"/></svg>
<svg class="a" style="left:137px;top:343px" width="16" height="16" viewBox="0 0 16 16" ><path d="M2.500 1.500 H9.500 L12.500 4.500 V14.500 H2.500 Z" fill="url(#jf)" stroke="#a58b3c" stroke-width="1"/><path d="M9.500 1.500 V4.500 H12.500" fill="#f4e6b4" stroke="#a58b3c" stroke-width=".8"/><path d="M8.300 4.500 v6 q0 2.200 -2 2.200 q-1.300 0 -1.700 -1.200" fill="none" stroke="#2c5fa6" stroke-width="1.900"/></svg>
<div class="t" style="left:157px;top:342px;letter-spacing:-0.106px;">TileFlower.java</div>
<svg class="a" style="left:124px;top:366px" width="6" height="10" viewBox="0 0 6 10" ><path d="M0.500 0.700 V8.300 L4.500 4.500 Z" fill="#fff" stroke="#a6a6a6" stroke-width="1" stroke-linejoin="round"/></svg>
<svg class="a" style="left:137px;top:361px" width="16" height="16" viewBox="0 0 16 16" ><path d="M2.500 1.500 H9.500 L12.500 4.500 V14.500 H2.500 Z" fill="url(#jf)" stroke="#a58b3c" stroke-width="1"/><path d="M9.500 1.500 V4.500 H12.500" fill="#f4e6b4" stroke="#a58b3c" stroke-width=".8"/><path d="M8.300 4.500 v6 q0 2.200 -2 2.200 q-1.300 0 -1.700 -1.200" fill="none" stroke="#2c5fa6" stroke-width="1.900"/></svg>
<div class="t" style="left:157px;top:360px;letter-spacing:-0.143px;">TileFluxLamp.java</div>
<svg class="a" style="left:124px;top:384px" width="6" height="10" viewBox="0 0 6 10" ><path d="M0.500 0.700 V8.300 L4.500 4.500 Z" fill="#fff" stroke="#a6a6a6" stroke-width="1" stroke-linejoin="round"/></svg>
<svg class="a" style="left:137px;top:379px" width="16" height="16" viewBox="0 0 16 16" ><path d="M2.500 1.500 H9.500 L12.500 4.500 V14.500 H2.500 Z" fill="url(#jf)" stroke="#a58b3c" stroke-width="1"/><path d="M9.500 1.500 V4.500 H12.500" fill="#f4e6b4" stroke="#a58b3c" stroke-width=".8"/><path d="M8.300 4.500 v6 q0 2.200 -2 2.200 q-1.300 0 -1.700 -1.200" fill="none" stroke="#2c5fa6" stroke-width="1.900"/></svg>
<div class="t" style="left:157px;top:378px;letter-spacing:-0.198px;">TileMachineBase.java</div>
<svg class="a" style="left:124px;top:402px" width="6" height="10" viewBox="0 0 6 10" ><path d="M0.500 0.700 V8.300 L4.500 4.500 Z" fill="#fff" stroke="#a6a6a6" stroke-width="1" stroke-linejoin="round"/></svg>
<svg class="a" style="left:137px;top:397px" width="16" height="16" viewBox="0 0 16 16" ><path d="M2.500 1.500 H9.500 L12.500 4.500 V14.500 H2.500 Z" fill="url(#jf)" stroke="#a58b3c" stroke-width="1"/><path d="M9.500 1.500 V4.500 H12.500" fill="#f4e6b4" stroke="#a58b3c" stroke-width=".8"/><path d="M8.300 4.500 v6 q0 2.200 -2 2.200 q-1.300 0 -1.700 -1.200" fill="none" stroke="#2c5fa6" stroke-width="1.900"/></svg>
<div class="t" style="left:157px;top:396px;letter-spacing:-0.071px;">TileManaFabricator.java</div>
<svg class="a" style="left:124px;top:420px" width="6" height="10" viewBox="0 0 6 10" ><path d="M0.500 0.700 V8.300 L4.500 4.500 Z" fill="#fff" stroke="#a6a6a6" stroke-width="1" stroke-linejoin="round"/></svg>
<svg class="a" style="left:137px;top:415px" width="16" height="16" viewBox="0 0 16 16" ><path d="M2.500 1.500 H9.500 L12.500 4.500 V14.500 H2.500 Z" fill="url(#jf)" stroke="#a58b3c" stroke-width="1"/><path d="M9.500 1.500 V4.500 H12.500" fill="#f4e6b4" stroke="#a58b3c" stroke-width=".8"/><path d="M8.300 4.500 v6 q0 2.200 -2 2.200 q-1.300 0 -1.700 -1.200" fill="none" stroke="#2c5fa6" stroke-width="1.900"/></svg>
<div class="t" style="left:157px;top:414px;letter-spacing:-0.104px;">TileNodeGenerator.java</div>
<svg class="a" style="left:124px;top:438px" width="6" height="10" viewBox="0 0 6 10" ><path d="M0.500 0.700 V8.300 L4.500 4.500 Z" fill="#fff" stroke="#a6a6a6" stroke-width="1" stroke-linejoin="round"/></svg>
<svg class="a" style="left:137px;top:433px" width="16" height="16" viewBox="0 0 16 16" ><path d="M2.500 1.500 H9.500 L12.500 4.500 V14.500 H2.500 Z" fill="url(#jf)" stroke="#a58b3c" stroke-width="1"/><path d="M9.500 1.500 V4.500 H12.500" fill="#f4e6b4" stroke="#a58b3c" stroke-width=".8"/><path d="M8.300 4.500 v6 q0 2.200 -2 2.200 q-1.300 0 -1.700 -1.200" fill="none" stroke="#2c5fa6" stroke-width="1.900"/></svg>
<div class="t" style="left:157px;top:432px;letter-spacing:-0.058px;">TileReconstructor.java</div>
<div class="sel" style="left:135px;top:450px;width:133px;height:18px"></div>
<svg class="a" style="left:124px;top:456px" width="6" height="10" viewBox="0 0 6 10" ><path d="M0.500 0.700 V8.300 L4.500 4.500 Z" fill="#fff" stroke="#a6a6a6" stroke-width="1" stroke-linejoin="round"/></svg>
<svg class="a" style="left:137px;top:451px" width="16" height="16" viewBox="0 0 16 16" ><path d="M2.500 1.500 H9.500 L12.500 4.500 V14.500 H2.500 Z" fill="url(#jf)" stroke="#a58b3c" stroke-width="1"/><path d="M9.500 1.500 V4.500 H12.500" fill="#f4e6b4" stroke="#a58b3c" stroke-width=".8"/><path d="M8.300 4.500 v6 q0 2.200 -2 2.200 q-1.300 0 -1.700 -1.200" fill="none" stroke="#2c5fa6" stroke-width="1.900"/></svg>
<div class="t" style="left:157px;top:450px;letter-spacing:-0.280px;">TileTCProcessor.java</div>
<svg class="a" style="left:124px;top:474px" width="6" height="10" viewBox="0 0 6 10" ><path d="M0.500 0.700 V8.300 L4.500 4.500 Z" fill="#fff" stroke="#a6a6a6" stroke-width="1" stroke-linejoin="round"/></svg>
<svg class="a" style="left:137px;top:469px" width="16" height="16" viewBox="0 0 16 16" ><path d="M2.500 1.500 H9.500 L12.500 4.500 V14.500 H2.500 Z" fill="url(#jf)" stroke="#a58b3c" stroke-width="1"/><path d="M9.500 1.500 V4.500 H12.500" fill="#f4e6b4" stroke="#a58b3c" stroke-width=".8"/><path d="M8.300 4.500 v6 q0 2.200 -2 2.200 q-1.300 0 -1.700 -1.200" fill="none" stroke="#2c5fa6" stroke-width="1.900"/></svg>
<div class="t" style="left:157px;top:468px;letter-spacing:-0.163px;">TileTeslaCoil.java</div>
<svg class="a" style="left:105px;top:492px" width="6" height="10" viewBox="0 0 6 10" ><path d="M0.500 0.700 V8.300 L4.500 4.500 Z" fill="#fff" stroke="#a6a6a6" stroke-width="1" stroke-linejoin="round"/></svg>
<svg class="a" style="left:118px;top:487px" width="16" height="16" viewBox="0 0 16 16" ><path d="M2.500 1.500 H9.500 L12.500 4.500 V14.500 H2.500 Z" fill="url(#jf)" stroke="#a58b3c" stroke-width="1"/><path d="M9.500 1.500 V4.500 H12.500" fill="#f4e6b4" stroke="#a58b3c" stroke-width=".8"/><path d="M8.300 4.500 v6 q0 2.200 -2 2.200 q-1.300 0 -1.700 -1.200" fill="none" stroke="#2c5fa6" stroke-width="1.900"/></svg>
<div class="t" style="left:138px;top:486px;letter-spacing:-0.011px;">BlockBiomeMorpher.java</div>
<svg class="a" style="left:105px;top:510px" width="6" height="10" viewBox="0 0 6 10" ><path d="M0.500 0.700 V8.300 L4.500 4.500 Z" fill="#fff" stroke="#a6a6a6" stroke-width="1" stroke-linejoin="round"/></svg>
<svg class="a" style="left:118px;top:505px" width="16" height="16" viewBox="0 0 16 16" ><path d="M2.500 1.500 H9.500 L12.500 4.500 V14.500 H2.500 Z" fill="url(#jf)" stroke="#a58b3c" stroke-width="1"/><path d="M9.500 1.500 V4.500 H12.500" fill="#f4e6b4" stroke="#a58b3c" stroke-width=".8"/><path d="M8.300 4.500 v6 q0 2.200 -2 2.200 q-1.300 0 -1.700 -1.200" fill="none" stroke="#2c5fa6" stroke-width="1.900"/></svg>
<div class="t" style="left:138px;top:504px;letter-spacing:-0.070px;">BlockBloodFabricator.java</div>
<svg class="a" style="left:105px;top:528px" width="6" height="10" viewBox="0 0 6 10" ><path d="M0.500 0.700 V8.300 L4.500 4.500 Z" fill="#fff" stroke="#a6a6a6" stroke-width="1" stroke-linejoin="round"/></svg>
<svg class="a" style="left:118px;top:523px" width="16" height="16" viewBox="0 0 16 16" ><path d="M2.500 1.500 H9.500 L12.500 4.500 V14.500 H2.500 Z" fill="url(#jf)" stroke="#a58b3c" stroke-width="1"/><path d="M9.500 1.500 V4.500 H12.500" fill="#f4e6b4" stroke="#a58b3c" stroke-width=".8"/><path d="M8.300 4.500 v6 q0 2.200 -2 2.200 q-1.300 0 -1.700 -1.200" fill="none" stroke="#2c5fa6" stroke-width="1.900"/></svg>
<div class="t" style="left:138px;top:522px;letter-spacing:-0.197px;">BlockCondenser.java</div>
<svg class="a" style="left:105px;top:546px" width="6" height="10" viewBox="0 0 6 10" ><path d="M0.500 0.700 V8.300 L4.500 4.500 Z" fill="#fff" stroke="#a6a6a6" stroke-width="1" stroke-linejoin="round"/></svg>
<svg class="a" style="left:118px;top:541px" width="16" height="16" viewBox="0 0 16 16" ><path d="M2.500 1.500 H9.500 L12.500 4.500 V14.500 H2.500 Z" fill="url(#jf)" stroke="#a58b3c" stroke-width="1"/><path d="M9.500 1.500 V4.500 H12.500" fill="#f4e6b4" stroke="#a58b3c" stroke-width=".8"/><path d="M8.300 4.500 v6 q0 2.200 -2 2.200 q-1.300 0 -1.700 -1.200" fill="none" stroke="#2c5fa6" stroke-width="1.900"/></svg>
<div class="t" style="left:138px;top:540px;letter-spacing:-0.176px;">BlockElectricBellows.java</div>
<svg class="a" style="left:105px;top:564px" width="6" height="10" viewBox="0 0 6 10" ><path d="M0.500 0.700 V8.300 L4.500 4.500 Z" fill="#fff" stroke="#a6a6a6" stroke-width="1" stroke-linejoin="round"/></svg>
<svg class="a" style="left:118px;top:559px" width="16" height="16" viewBox="0 0 16 16" ><path d="M2.500 1.500 H9.500 L12.500 4.500 V14.500 H2.500 Z" fill="url(#jf)" stroke="#a58b3c" stroke-width="1"/><path d="M9.500 1.500 V4.500 H12.500" fill="#f4e6b4" stroke="#a58b3c" stroke-width=".8"/><path d="M8.300 4.500 v6 q0 2.200 -2 2.200 q-1.300 0 -1.700 -1.200" fill="none" stroke="#2c5fa6" stroke-width="1.900"/></svg>
<div class="t" style="left:138px;top:558px;letter-spacing:-0.161px;">BlockFluxLamp.java</div>
<svg class="a" style="left:105px;top:582px" width="6" height="10" viewBox="0 0 6 10" ><path d="M0.500 0.700 V8.300 L4.500 4.500 Z" fill="#fff" stroke="#a6a6a6" stroke-width="1" stroke-linejoin="round"/></svg>
<svg class="a" style="left:118px;top:577px" width="16" height="16" viewBox="0 0 16 16" ><path d="M2.500 1.500 H9.500 L12.500 4.500 V14.500 H2.500 Z" fill="url(#jf)" stroke="#a58b3c" stroke-width="1"/><path d="M9.500 1.500 V4.500 H12.500" fill="#f4e6b4" stroke="#a58b3c" stroke-width=".8"/><path d="M8.300 4.500 v6 q0 2.200 -2 2.200 q-1.300 0 -1.700 -1.200" fill="none" stroke="#2c5fa6" stroke-width="1.900"/></svg>
<div class="t" style="left:138px;top:576px;letter-spacing:-0.087px;">BlockManaFabricator.java</div>
<svg class="a" style="left:105px;top:600px" width="6" height="10" viewBox="0 0 6 10" ><path d="M0.500 0.700 V8.300 L4.500 4.500 Z" fill="#fff" stroke="#a6a6a6" stroke-width="1" stroke-linejoin="round"/></svg>
<svg class="a" style="left:118px;top:595px" width="16" height="16" viewBox="0 0 16 16" ><path d="M2.500 1.500 H9.500 L12.500 4.500 V14.500 H2.500 Z" fill="url(#jf)" stroke="#a58b3c" stroke-width="1"/><path d="M9.500 1.500 V4.500 H12.500" fill="#f4e6b4" stroke="#a58b3c" stroke-width=".8"/><path d="M8.300 4.500 v6 q0 2.200 -2 2.200 q-1.300 0 -1.700 -1.200" fill="none" stroke="#2c5fa6" stroke-width="1.900"/></svg>
<div class="t" style="left:138px;top:594px;letter-spacing:-0.120px;">BlockNodeGenerator.java</div>
<svg class="a" style="left:105px;top:618px" width="6" height="10" viewBox="0 0 6 10" ><path d="M0.500 0.700 V8.300 L4.500 4.500 Z" fill="#fff" stroke="#a6a6a6" stroke-width="1" stroke-linejoin="round"/></svg>
<svg class="a" style="left:118px;top:613px" width="16" height="16" viewBox="0 0 16 16" ><path d="M2.500 1.500 H9.500 L12.500 4.500 V14.500 H2.500 Z" fill="url(#jf)" stroke="#a58b3c" stroke-width="1"/><path d="M9.500 1.500 V4.500 H12.500" fill="#f4e6b4" stroke="#a58b3c" stroke-width=".8"/><path d="M8.300 4.500 v6 q0 2.200 -2 2.200 q-1.300 0 -1.700 -1.200" fill="none" stroke="#2c5fa6" stroke-width="1.900"/></svg>
<div class="t" style="left:138px;top:612px;letter-spacing:-0.075px;">BlockReconstructor.java</div>
<svg class="a" style="left:105px;top:636px" width="6" height="10" viewBox="0 0 6 10" ><path d="M0.500 0.700 V8.300 L4.500 4.500 Z" fill="#fff" stroke="#a6a6a6" stroke-width="1" stroke-linejoin="round"/></svg>
<svg class="a" style="left:118px;top:631px" width="16" height="16" viewBox="0 0 16 16" ><path d="M2.500 1.500 H9.500 L12.500 4.500 V14.500 H2.500 Z" fill="url(#jf)" stroke="#a58b3c" stroke-width="1"/><path d="M9.500 1.500 V4.500 H12.500" fill="#f4e6b4" stroke="#a58b3c" stroke-width=".8"/><path d="M8.300 4.500 v6 q0 2.200 -2 2.200 q-1.300 0 -1.700 -1.200" fill="none" stroke="#2c5fa6" stroke-width="1.900"/></svg>
<div class="t" style="left:138px;top:630px;letter-spacing:-0.288px;">BlockTCProcessor.java</div>
<svg class="a" style="left:105px;top:654px" width="6" height="10" viewBox="0 0 6 10" ><path d="M0.500 0.700 V8.300 L4.500 4.500 Z" fill="#fff" stroke="#a6a6a6" stroke-width="1" stroke-linejoin="round"/></svg>
<svg class="a" style="left:118px;top:649px" width="16" height="16" viewBox="0 0 16 16" ><path d="M2.500 1.500 H9.500 L12.500 4.500 V14.500 H2.500 Z" fill="url(#jf)" stroke="#a58b3c" stroke-width="1"/><path d="M9.500 1.500 V4.500 H12.500" fill="#f4e6b4" stroke="#a58b3c" stroke-width=".8"/><path d="M8.300 4.500 v6 q0 2.200 -2 2.200 q-1.300 0 -1.700 -1.200" fill="none" stroke="#2c5fa6" stroke-width="1.900"/></svg>
<div class="t" style="left:138px;top:648px;letter-spacing:-0.178px;">BlockTeslaCoil.java</div>
<svg class="a" style="left:86px;top:672px" width="6" height="10" viewBox="0 0 6 10" ><path d="M0.500 0.700 V8.300 L4.500 4.500 Z" fill="#fff" stroke="#a6a6a6" stroke-width="1" stroke-linejoin="round"/></svg>
<svg class="a" style="left:100px;top:667px" width="14" height="16" viewBox="0 0 14 16" ><rect x="1.500" y="3.500" width="10" height="10" fill="#f4cfa0" stroke="#a4622c" stroke-width="1.100"/><rect x="2.500" y="4.500" width="3.500" height="3.500" fill="#fbe6c4"/><rect x="7" y="4.500" width="3.500" height="3.500" fill="#fbe6c4"/><rect x="2.500" y="9" width="3.500" height="3.500" fill="#fbe6c4"/><rect x="7" y="9" width="3.500" height="3.500" fill="#fbe6c4"/><path d="M6.500 2 v13 M0 8.500 h13" stroke="#a4622c" stroke-width="1"/></svg>
<div class="t" style="left:119px;top:666px;letter-spacing:-0.147px;">storage</div>
<svg class="a" style="left:86px;top:690px" width="6" height="10" viewBox="0 0 6 10" ><path d="M0.500 0.700 V8.300 L4.500 4.500 Z" fill="#fff" stroke="#a6a6a6" stroke-width="1" stroke-linejoin="round"/></svg>
<svg class="a" style="left:99px;top:685px" width="16" height="16" viewBox="0 0 16 16" ><path d="M2.500 1.500 H9.500 L12.500 4.500 V14.500 H2.500 Z" fill="url(#jf)" stroke="#a58b3c" stroke-width="1"/><path d="M9.500 1.500 V4.500 H12.500" fill="#f4e6b4" stroke="#a58b3c" stroke-width=".8"/><path d="M8.300 4.500 v6 q0 2.200 -2 2.200 q-1.300 0 -1.700 -1.200" fill="none" stroke="#2c5fa6" stroke-width="1.900"/></svg>
<div class="t" style="left:119px;top:684px;letter-spacing:-0.360px;">BlockBase.java</div>
<svg class="a" style="left:86px;top:708px" width="6" height="10" viewBox="0 0 6 10" ><path d="M0.500 0.700 V8.300 L4.500 4.500 Z" fill="#fff" stroke="#a6a6a6" stroke-width="1" stroke-linejoin="round"/></svg>
<svg class="a" style="left:99px;top:703px" width="16" height="16" viewBox="0 0 16 16" ><path d="M2.500 1.500 H9.500 L12.500 4.500 V14.500 H2.500 Z" fill="url(#jf)" stroke="#a58b3c" stroke-width="1"/><path d="M9.500 1.500 V4.500 H12.500" fill="#f4e6b4" stroke="#a58b3c" stroke-width=".8"/><path d="M8.300 4.500 v6 q0 2.200 -2 2.200 q-1.300 0 -1.700 -1.200" fill="none" stroke="#2c5fa6" stroke-width="1.900"/></svg>
<div class="t" style="left:119px;top:702px;letter-spacing:-0.163px;">BlockCosmeticOpaque.java</div>
<svg class="a" style="left:86px;top:726px" width="6" height="10" viewBox="0 0 6 10" ><path d="M0.500 0.700 V8.300 L4.500 4.500 Z" fill="#fff" stroke="#a6a6a6" stroke-width="1" stroke-linejoin="round"/></svg>
<svg class="a" style="left:99px;top:721px" width="16" height="16" viewBox="0 0 16 16" ><path d="M2.500 1.500 H9.500 L12.500 4.500 V14.500 H2.500 Z" fill="url(#jf)" stroke="#a58b3c" stroke-width="1"/><path d="M9.500 1.500 V4.500 H12.500" fill="#f4e6b4" stroke="#a58b3c" stroke-width=".8"/><path d="M8.300 4.500 v6 q0 2.200 -2 2.200 q-1.300 0 -1.700 -1.200" fill="none" stroke="#2c5fa6" stroke-width="1.900"/></svg>
<div class="t" style="left:119px;top:720px;letter-spacing:-0.238px;">BlockCosmeticPane.java</div>
<svg class="a" style="left:86px;top:744px" width="6" height="10" viewBox="0 0 6 10" ><path d="M0.500 0.700 V8.300 L4.500 4.500 Z" fill="#fff" stroke="#a6a6a6" stroke-width="1" stroke-linejoin="round"/></svg>
<svg class="a" style="left:99px;top:739px" width="16" height="16" viewBox="0 0 16 16" ><path d="M2.500 1.500 H9.500 L12.500 4.500 V14.500 H2.500 Z" fill="url(#jf)" stroke="#a58b3c" stroke-width="1"/><path d="M9.500 1.500 V4.500 H12.500" fill="#f4e6b4" stroke="#a58b3c" stroke-width=".8"/><path d="M8.300 4.500 v6 q0 2.200 -2 2.200 q-1.300 0 -1.700 -1.200" fill="none" stroke="#2c5fa6" stroke-width="1.900"/></svg>
<div class="t" style="left:119px;top:738px;letter-spacing:-0.237px;">BlockCrystal.java</div>
<svg class="a" style="left:86px;top:762px" width="6" height="10" viewBox="0 0 6 10" ><path d="M0.500 0.700 V8.300 L4.500 4.500 Z" fill="#fff" stroke="#a6a6a6" stroke-width="1" stroke-linejoin="round"/></svg>
<svg class="a" style="left:99px;top:757px" width="16" height="16" viewBox="0 0 16 16" ><path d="M2.500 1.500 H9.500 L12.500 4.500 V14.500 H2.500 Z" fill="url(#jf)" stroke="#a58b3c" stroke-width="1"/><path d="M9.500 1.500 V4.500 H12.500" fill="#f4e6b4" stroke="#a58b3c" stroke-width=".8"/><path d="M8.300 4.500 v6 q0 2.200 -2 2.200 q-1.300 0 -1.700 -1.200" fill="none" stroke="#2c5fa6" stroke-width="1.900"/></svg>
<div class="t" style="left:119px;top:756px;letter-spacing:0.055px;">TileTechnomancy.java</div>
<svg class="a" style="left:86px;top:780px" width="6" height="10" viewBox="0 0 6 10" ><path d="M0.500 0.700 V8.300 L4.500 4.500 Z" fill="#fff" stroke="#a6a6a6" stroke-width="1" stroke-linejoin="round"/></svg>
<svg class="a" style="left:99px;top:775px" width="16" height="16" viewBox="0 0 16 16" ><path d="M2.500 1.500 H9.500 L12.500 4.500 V14.500 H2.500 Z" fill="url(#jf)" stroke="#a58b3c" stroke-width="1"/><path d="M9.500 1.500 V4.500 H12.500" fill="#f4e6b4" stroke="#a58b3c" stroke-width=".8"/><path d="M8.300 4.500 v6 q0 2.200 -2 2.200 q-1.300 0 -1.700 -1.200" fill="none" stroke="#2c5fa6" stroke-width="1.900"/></svg>
<div class="t" style="left:119px;top:774px;letter-spacing:-0.156px;">TMBlocks.java</div>
<svg class="a" style="left:67px;top:798px" width="6" height="10" viewBox="0 0 6 10" ><path d="M0.500 0.700 V8.300 L4.500 4.500 Z" fill="#fff" stroke="#a6a6a6" stroke-width="1" stroke-linejoin="round"/></svg>
<svg class="a" style="left:81px;top:793px" width="14" height="16" viewBox="0 0 14 16" ><rect x="1.500" y="3.500" width="10" height="10" fill="#f4cfa0" stroke="#a4622c" stroke-width="1.100"/><rect x="2.500" y="4.500" width="3.500" height="3.500" fill="#fbe6c4"/><rect x="7" y="4.500" width="3.500" height="3.500" fill="#fbe6c4"/><rect x="2.500" y="9" width="3.500" height="3.500" fill="#fbe6c4"/><rect x="7" y="9" width="3.500" height="3.500" fill="#fbe6c4"/><path d="M6.500 2 v13 M0 8.500 h13" stroke="#a4622c" stroke-width="1"/></svg>
<div class="t" style="left:100px;top:792px;letter-spacing:-0.129px;">handlers</div>
<svg class="a" style="left:67px;top:816px" width="6" height="10" viewBox="0 0 6 10" ><path d="M0.500 0.700 V8.300 L4.500 4.500 Z" fill="#fff" stroke="#a6a6a6" stroke-width="1" stroke-linejoin="round"/></svg>
<svg class="a" style="left:81px;top:811px" width="14" height="16" viewBox="0 0 14 16" ><rect x="1.500" y="3.500" width="10" height="10" fill="#f4cfa0" stroke="#a4622c" stroke-width="1.100"/><rect x="2.500" y="4.500" width="3.500" height="3.500" fill="#fbe6c4"/><rect x="7" y="4.500" width="3.500" height="3.500" fill="#fbe6c4"/><rect x="2.500" y="9" width="3.500" height="3.500" fill="#fbe6c4"/><rect x="7" y="9" width="3.500" height="3.500" fill="#fbe6c4"/><path d="M6.500 2 v13 M0 8.500 h13" stroke="#a4622c" stroke-width="1"/></svg>
<div class="t" style="left:100px;top:810px;letter-spacing:-0.034px;">items</div>
<svg class="a" style="left:67px;top:834px" width="6" height="10" viewBox="0 0 6 10" ><path d="M0.500 0.700 V8.300 L4.500 4.500 Z" fill="#fff" stroke="#a6a6a6" stroke-width="1" stroke-linejoin="round"/></svg>
<svg class="a" style="left:81px;top:829px" width="14" height="16" viewBox="0 0 14 16" ><rect x="1.500" y="3.500" width="10" height="10" fill="#f4cfa0" stroke="#a4622c" stroke-width="1.100"/><rect x="2.500" y="4.500" width="3.500" height="3.500" fill="#fbe6c4"/><rect x="7" y="4.500" width="3.500" height="3.500" fill="#fbe6c4"/><rect x="2.500" y="9" width="3.500" height="3.500" fill="#fbe6c4"/><rect x="7" y="9" width="3.500" height="3.500" fill="#fbe6c4"/><path d="M6.500 2 v13 M0 8.500 h13" stroke="#a4622c" stroke-width="1"/></svg>
<div class="t" style="left:100px;top:828px;letter-spacing:0.328px;">lib</div>
<svg class="a" style="left:67px;top:852px" width="6" height="10" viewBox="0 0 6 10" ><path d="M0.500 0.700 V8.300 L4.500 4.500 Z" fill="#fff" stroke="#a6a6a6" stroke-width="1" stroke-linejoin="round"/></svg>
<svg class="a" style="left:81px;top:847px" width="14" height="16" viewBox="0 0 14 16" ><rect x="1.500" y="3.500" width="10" height="10" fill="#f4cfa0" stroke="#a4622c" stroke-width="1.100"/><rect x="2.500" y="4.500" width="3.500" height="3.500" fill="#fbe6c4"/><rect x="7" y="4.500" width="3.500" height="3.500" fill="#fbe6c4"/><rect x="2.500" y="9" width="3.500" height="3.500" fill="#fbe6c4"/><rect x="7" y="9" width="3.500" height="3.500" fill="#fbe6c4"/><path d="M6.500 2 v13 M0 8.500 h13" stroke="#a4622c" stroke-width="1"/></svg>
<div class="t" style="left:100px;top:846px;letter-spacing:0.138px;">network</div>
<svg class="a" style="left:67px;top:870px" width="6" height="10" viewBox="0 0 6 10" ><path d="M0.500 0.700 V8.300 L4.500 4.500 Z" fill="#fff" stroke="#a6a6a6" stroke-width="1" stroke-linejoin="round"/></svg>
<svg class="a" style="left:81px;top:865px" width="14" height="16" viewBox="0 0 14 16" ><rect x="1.500" y="3.500" width="10" height="10" fill="#f4cfa0" stroke="#a4622c" stroke-width="1.100"/><rect x="2.500" y="4.500" width="3.500" height="3.500" fill="#fbe6c4"/><rect x="7" y="4.500" width="3.500" height="3.500" fill="#fbe6c4"/><rect x="2.500" y="9" width="3.500" height="3.500" fill="#fbe6c4"/><rect x="7" y="9" width="3.500" height="3.500" fill="#fbe6c4"/><path d="M6.500 2 v13 M0 8.500 h13" stroke="#a4622c" stroke-width="1"/></svg>
<div class="t" style="left:100px;top:864px;letter-spacing:-0.098px;">proxies</div>
<svg class="a" style="left:67px;top:888px" width="6" height="10" viewBox="0 0 6 10" ><path d="M0.500 0.700 V8.300 L4.500 4.500 Z" fill="#fff" stroke="#a6a6a6" stroke-width="1" stroke-linejoin="round"/></svg>
<svg class="a" style="left:81px;top:883px" width="14" height="16" viewBox="0 0 14 16" ><rect x="1.500" y="3.500" width="10" height="10" fill="#eef2fc" stroke="#555a60" stroke-width="1.100"/><path d="M6.500 2 v13 M0 8.500 h13" stroke="#555a60" stroke-width="1"/></svg>
<div class="t" style="left:100px;top:882px;letter-spacing:-0.170px;">renderer</div>
</div>
<div class="sbv" style="left:407px;top:107px;width:16px;height:894px"></div><div class="thv" style="left:408px;top:125px;width:14px;height:687px"></div><svg class="a" style="left:411px;top:464px" width="9" height="8" viewBox="0 0 9 8" ><path d="M0 0.500 h8 M0 2.500 h8 M0 4.500 h8 M0 6.500 h8" stroke="#5a5a5a" stroke-width="1" stroke-dasharray="8 0"/><path d="M0 1.500 h8 M0 3.500 h8 M0 5.500 h8" stroke="#fff" stroke-width="1"/></svg><svg class="a" style="left:411px;top:113px" width="9" height="6" viewBox="0 0 9 6" ><path d="M0.500 5 L4.500 1 L8.500 5 Z" fill="#3a3a3a"/></svg><svg class="a" style="left:411px;top:990px" width="9" height="6" viewBox="0 0 9 6" ><path d="M0.500 1 L4.500 5 L8.500 1 Z" fill="#3a3a3a"/></svg>
<div class="panel" style="left:441px;top:79px;width:1146px;height:929px;overflow:hidden;border-color:#aab4ce"><div class="a" style="left:-1px;top:-1px;width:1146px;height:26px;background:linear-gradient(180deg,#eef4fb 0,#dde8f4 12%,#d1dfee 24%,#d0dfee 100%)"></div><div class="a" style="left:-1px;top:24px;width:1146px;height:1px;background:#a9b8d2"></div></div>
<svg class="a" style="left:441px;top:79px" width="166" height="27" viewBox="0 0 166 27" ><path d="M0 27 V6 Q0 0 6 0 H151 Q158 0 158 7 V26.500 H0 Z" fill="#fff"/><path d="M0.500 27 V6.500 Q0.500 0.500 6.500 0.500 H151 Q157.500 0.500 157.500 7 V25.500 H166" fill="none" stroke="#aab4ce" stroke-width="1"/></svg>
<svg class="a" style="left:446px;top:85px" width="16" height="16" viewBox="0 0 16 16" ><path d="M2.500 1.500 H9.500 L12.500 4.500 V14.500 H2.500 Z" fill="url(#jf)" stroke="#a58b3c" stroke-width="1"/><path d="M9.500 1.500 V4.500 H12.500" fill="#f4e6b4" stroke="#a58b3c" stroke-width=".8"/><path d="M8.300 4.500 v6 q0 2.200 -2 2.200 q-1.300 0 -1.700 -1.200" fill="none" stroke="#2c5fa6" stroke-width="1.900"/></svg>
<div class="t" style="left:465px;top:84px;letter-spacing:-0.280px;">TileTCProcessor.java</div>
<svg class="a" style="left:582px;top:88px" width="11" height="11" viewBox="0 0 11 11" ><path d="M1 0.500 h2.500 l2 2.500 l2 -2.500 h2.500 v1.500 l-2.800 3.500 l2.800 3.500 v1.500 h-2.500 l-2 -2.500 l-2 2.500 h-2.500 v-1.500 l2.800 -3.500 l-2.800 -3.500 Z" fill="#fff" stroke="#4a4a4a" stroke-width=".9"/></svg>
<svg class="a" style="left:605px;top:85px" width="16" height="16" viewBox="0 0 16 16" ><path d="M2.500 1.500 H9.500 L12.500 4.500 V14.500 H2.500 Z" fill="url(#jf)" stroke="#a58b3c" stroke-width="1"/><path d="M9.500 1.500 V4.500 H12.500" fill="#f4e6b4" stroke="#a58b3c" stroke-width=".8"/><path d="M8.300 4.500 v6 q0 2.200 -2 2.200 q-1.300 0 -1.700 -1.200" fill="none" stroke="#2c5fa6" stroke-width="1.900"/></svg>
<div class="t" style="left:623.500px;top:84px;letter-spacing:-0.207px;">ItemProcessedIron.java</div>
<svg class="a" style="left:1539px;top:87px" width="12" height="6" viewBox="0 0 12 6" ><rect x="0.500" y="0.500" width="9" height="3" fill="#fff" stroke="#5a5a5a" stroke-width="1"/></svg>
<svg class="a" style="left:1562px;top:87px" width="12" height="10" viewBox="0 0 12 10" ><rect x="2.500" y="0.500" width="6" height="4" fill="#fff" stroke="#5a5a5a" stroke-width="1"/><path d="M2.500 1.500 h6" stroke="#5a5a5a"/><rect x="0.500" y="3.500" width="6" height="4" fill="#fff" stroke="#5a5a5a" stroke-width="1"/><path d="M0.500 4.500 h6" stroke="#5a5a5a"/></svg>
<div class="a" style="left:447px;top:107px;width:12px;height:894px;background:#f7f7f7"></div>
<div class="a" style="left:447px;top:122px;width:12px;height:855px;background-color:#55a0ff;background-image:linear-gradient(45deg,#b8dcff 25%,transparent 25%,transparent 75%,#b8dcff 75%),linear-gradient(45deg,#b8dcff 25%,transparent 25%,transparent 75%,#b8dcff 75%);background-size:2px 2px;background-position:0 0,1px 1px"></div>
<div class="a" style="left:447px;top:122px;width:12px;height:1px;background:#4a98f8"></div><div class="a" style="left:447px;top:976px;width:12px;height:1px;background:#4a98f8"></div>
<svg class="a" style="left:447px;top:139px" width="12" height="9" viewBox="0 0 12 9" ><path d="M0.500 7.500 L5.500 2.500 L10.500 7.500 Z" fill="#2a9a2a" stroke="#1a7a1a" stroke-width=".8"/><path d="M2.500 6.800 L5.500 3.800 L8.500 6.800 Z" fill="#5cc85c"/></svg>
<div class="a" style="left:459px;top:107px;width:30px;height:877px;background:#fff"></div>
<div class="a" style="left:489px;top:107px;width:1px;height:877px;background:#f0f0f0"></div>
<div class="a" style="left:447px;top:984px;width:43px;height:17px;background:#f9f9f9"></div>
<div class="a" style="left:492px;top:947px;width:1058px;height:15px;background:#e8f2fe"></div>
<div class="clip" style="left:459px;top:107px;width:30px;height:877px">
<div class="code ln" style="left:7px;top:1px">30</div>
<div class="code ln" style="left:7px;top:16px">31</div>
<div class="code ln" style="left:7px;top:31px">32</div>
<div class="code ln" style="left:7px;top:46px">33</div>
<div class="code ln" style="left:7px;top:61px">34</div>
<div class="code ln" style="left:7px;top:76px">35</div>
<div class="code ln" style="left:7px;top:91px">36</div>
<div class="code ln" style="left:7px;top:106px">37</div>
<div class="code ln" style="left:7px;top:121px">38</div>
<div class="code ln" style="left:7px;top:136px">39</div>
<div class="code ln" style="left:7px;top:151px">40</div>
<div class="code ln" style="left:7px;top:166px">41</div>
<div class="code ln" style="left:7px;top:181px">42</div>
<div class="code ln" style="left:7px;top:196px">43</div>
<div class="code ln" style="left:7px;top:211px">44</div>
<div class="code ln" style="left:7px;top:226px">45</div>
<div class="code ln" style="left:7px;top:241px">46</div>
<div class="code ln" style="left:7px;top:256px">47</div>
<div class="code ln" style="left:7px;top:271px">48</div>
<div class="code ln" style="left:7px;top:286px">49</div>
<div class="code ln" style="left:7px;top:301px">50</div>
<div class="code ln" style="left:7px;top:316px">51</div>
<div class="code ln" style="left:7px;top:331px">52</div>
<div class="code ln" style="left:7px;top:346px">53</div>
<div class="code ln" style="left:7px;top:361px">54</div>
<div class="code ln" style="left:7px;top:376px">55</div>
<div class="code ln" style="left:7px;top:391px">56</div>
<div class="code ln" style="left:7px;top:406px">57</div>
<div class="code ln" style="left:7px;top:421px">58</div>
<div class="code ln" style="left:7px;top:436px">59</div>
<div class="code ln" style="left:7px;top:451px">60</div>
<div class="code ln" style="left:7px;top:466px">61</div>
<div class="code ln" style="left:7px;top:481px">62</div>
<div class="code ln" style="left:7px;top:496px">63</div>
<div class="code ln" style="left:7px;top:511px">64</div>
<div class="code ln" style="left:7px;top:526px">65</div>
<div class="code ln" style="left:7px;top:541px">66</div>
<div class="code ln" style="left:7px;top:556px">67</div>
<div class="code ln" style="left:7px;top:571px">68</div>
<div class="code ln" style="left:7px;top:586px">69</div>
<div class="code ln" style="left:7px;top:601px">70</div>
<div class="code ln" style="left:7px;top:616px">71</div>
<div class="code ln" style="left:7px;top:631px">72</div>
<div class="code ln" style="left:7px;top:646px">73</div>
<div class="code ln" style="left:7px;top:661px">74</div>
<div class="code ln" style="left:7px;top:676px">75</div>
<div class="code ln" style="left:7px;top:691px">76</div>
<div class="code ln" style="left:7px;top:706px">77</div>
<div class="code ln" style="left:7px;top:721px">78</div>
<div class="code ln" style="left:7px;top:736px">79</div>
<div class="code ln" style="left:7px;top:751px">80</div>
<div class="code ln" style="left:7px;top:766px">81</div>
<div class="code ln" style="left:7px;top:781px">82</div>
<div class="code ln" style="left:7px;top:796px">83</div>
<div class="code ln" style="left:7px;top:811px">84</div>
<div class="code ln" style="left:7px;top:826px">85</div>
<div class="code ln" style="left:7px;top:841px">86</div>
<div class="code ln" style="left:7px;top:856px">87</div>
<div class="code ln" style="left:7px;top:871px">88</div>
</div>
<svg class="a" style="left:480px;top:125px" width="9" height="9" viewBox="0 0 9 9" ><circle cx="4.500" cy="4.500" r="3.900" fill="#e6eef8" stroke="#98a8bc" stroke-width=".9"/><path d="M2.500 4.500 h4" stroke="#6a7c94" stroke-width="1"/></svg>
<div class="clip" style="left:492px;top:107px;width:1058px;height:877px">
<div class="code" style="left:0;top:16px">    <span class="an">@Override</span></div>
<div class="code" style="left:0;top:31px">    <span class="k">public</span> <span class="k">void</span> updateEntity() {</div>
<div class="code" style="left:0;top:46px">        <span class="k">if</span>(<span class="k">this</span>.<span class="f">amount</span> &gt; 16 &amp;&amp; <span class="k">this</span>.<span class="f">inventory</span>[0] != <span class="k">null</span>) {</div>
<div class="code" style="left:0;top:61px">            <span class="k">int</span> f = 0;</div>
<div class="code" style="left:0;top:76px">            <span class="k">int</span> j = 0;</div>
<div class="code" style="left:0;top:91px">            <span class="k">for</span>(<span class="k">int</span> i = 0; i &lt; TMItems.<span class="sf">ores</span>.<span class="f">length</span>; i++) {</div>
<div class="code" style="left:0;top:106px">                <span class="k">if</span>(<span class="k">this</span>.<span class="f">inventory</span>[i].getItem() == TMItems.<span class="sf">ores</span>[i].getItem()) {</div>
<div class="code" style="left:0;top:121px">                    f = i + 1;</div>
<div class="code" style="left:0;top:136px">                    <span class="k">break</span>;</div>
<div class="code" style="left:0;top:151px">                }</div>
<div class="code" style="left:0;top:166px">                <span class="k">if</span>(<span class="k">this</span>.<span class="f">inventory</span>[i].<span class="f">itemID</span> == Block.<span class="sf">oreGold</span>.<span class="f">blockID</span> || <span class="k">this</span>.<span class="f">inventory</span>[i].<span class="f">itemID</span> == Block.<span class="sf">oreIron</span>.<span class="f">blockID</span> || <span class="k">this</span>.<span class="f">inventory</span>[i].<span class="f">itemID</span> == Block.<span class="f">oreDiamond</span>.<span class="f">blockID</span>) {</div>
<div class="code" style="left:0;top:181px">                    j = i + 1;</div>
<div class="code" style="left:0;top:196px">                    <span class="k">break</span>;</div>
<div class="code" style="left:0;top:211px">                }</div>
<div class="code" style="left:0;top:226px">            }</div>
<div class="code" style="left:0;top:241px">            <span class="k">if</span>(f != 0) {</div>
<div class="code" style="left:0;top:256px">                <span class="k">if</span>(<span class="k">this</span>.<span class="f">inventory</span>[1] == <span class="k">null</span>) {</div>
<div class="code" style="left:0;top:271px">                    ItemStack stack = <span class="k">new</span> ItemStack(TMItems.<span class="sf">ores</span>[f - 1].getItem(), <span class="k">this</span>.<span class="f">inventory</span>[1].getItemDamage() + 1, 1);</div>
<div class="code" style="left:0;top:286px">                    stack.<span class="f">stackTagCompound</span>.setBoolean(<span class="s">"Thaumcraft"</span>, <span class="k">true</span>);</div>
<div class="code" style="left:0;top:301px">                    <span class="k">this</span>.<span class="f">inventory</span>[1] = stack.copy();</div>
<div class="code" style="left:0;top:316px">                    <span class="k">this</span>.takeFromContainer(<span class="k">this</span>.<span class="f">aspect</span>, 4);</div>
<div class="code" style="left:0;top:331px">                    <span class="k">this</span>.<span class="f">inventory</span>[0].<span class="f">stackSize</span> -= 1;</div>
<div class="code" style="left:0;top:346px">                    <span class="k">if</span>(<span class="k">this</span>.<span class="f">inventory</span>[0].<span class="f">stackSize</span> == 0) {</div>
<div class="code" style="left:0;top:361px">                        <span class="k">this</span>.<span class="f">inventory</span>[0] = <span class="k">null</span>;</div>
<div class="code" style="left:0;top:376px">                    }</div>
<div class="code" style="left:0;top:391px">                }<span class="k">else</span> <span class="k">if</span>(<span class="k">this</span>.<span class="f">inventory</span>[1].getItem() == TMItems.<span class="sf">ores</span>[f - 1].getItem()) {</div>
<div class="code" style="left:0;top:406px">                    <span class="k">if</span>(<span class="k">this</span>.<span class="f">inventory</span>[1].<span class="f">stackSize</span> &lt; <span class="k">this</span>.<span class="f">inventory</span>[1].getMaxStackSize()) {</div>
<div class="code" style="left:0;top:421px">                        <span class="k">this</span>.<span class="f">inventory</span>[1].<span class="f">stackSize</span> += 1;</div>
<div class="code" style="left:0;top:436px">                        <span class="k">this</span>.takeFromContainer(<span class="k">this</span>.<span class="f">aspect</span>, 4);</div>
<div class="code" style="left:0;top:451px">                        <span class="k">this</span>.<span class="f">inventory</span>[0].<span class="f">stackSize</span> -= 1;</div>
<div class="code" style="left:0;top:466px">                        <span class="k">if</span>(<span class="k">this</span>.<span class="f">inventory</span>[0].<span class="f">stackSize</span> == 0) {</div>
<div class="code" style="left:0;top:481px">                            <span class="k">this</span>.<span class="f">inventory</span>[0] = <span class="k">null</span>;</div>
<div class="code" style="left:0;top:496px">                        }</div>
<div class="code" style="left:0;top:511px">                    }</div>
<div class="code" style="left:0;top:526px">                }</div>
<div class="code" style="left:0;top:541px">            }</div>
<div class="code" style="left:0;top:556px">            <span class="k">if</span>(j != 0) {</div>
<div class="code" style="left:0;top:571px">                <span class="k">if</span>(<span class="k">this</span>.<span class="f">inventory</span>[1] == <span class="k">null</span>) {</div>
<div class="code" style="left:0;top:586px">                    ItemStack stack = <span class="k">new</span> ItemStack(getOreEquivalencies(<span class="k">this</span>.<span class="f">inventory</span>[0].<span class="f">itemID</span>, <span class="k">this</span>.<span class="f">inventory</span>[0].getItemDamage()), 1, 1);</div>
<div class="code" style="left:0;top:601px">                    stack.<span class="f">stackTagCompound</span>.setBoolean(<span class="s">"Thaumcraft"</span>, <span class="k">true</span>);</div>
<div class="code" style="left:0;top:616px">                    <span class="k">this</span>.<span class="f">inventory</span>[1] = stack.copy();</div>
<div class="code" style="left:0;top:631px">                    <span class="k">this</span>.takeFromContainer(<span class="k">this</span>.<span class="f">aspect</span>, 4);</div>
<div class="code" style="left:0;top:646px">                }<span class="k">else</span> <span class="k">if</span>(<span class="k">this</span>.<span class="f">inventory</span>[1] != <span class="k">null</span>) {</div>
<div class="code" style="left:0;top:661px">                    <span class="k">if</span>(getOreEquivalencies(<span class="k">this</span>.<span class="f">inventory</span>[0].<span class="f">itemID</span>, <span class="k">this</span>.<span class="f">inventory</span>[0].getItemDamage()) == <span class="k">this</span>.<span class="f">inventory</span>[1].getItem()) {</div>
<div class="code" style="left:0;top:676px">                        <span class="k">if</span>(<span class="k">this</span>.<span class="f">inventory</span>[1].<span class="f">stackSize</span> &lt; <span class="k">this</span>.<span class="f">inventory</span>[1].getMaxStackSize()) {</div>
<div class="code" style="left:0;top:691px">                            <span class="k">this</span>.<span class="f">inventory</span>[1].<span class="f">stackSize</span> += 1;</div>
<div class="code" style="left:0;top:706px">                            <span class="k">this</span>.takeFromContainer(<span class="k">this</span>.<span class="f">aspect</span>, 4);</div>
<div class="code" style="left:0;top:721px">                            <span class="k">this</span>.<span class="f">inventory</span>[0].<span class="f">stackSize</span> -= 1;</div>
<div class="code" style="left:0;top:736px">                            <span class="k">if</span>(<span class="k">this</span>.<span class="f">inventory</span>[0].<span class="f">stackSize</span> == 0) {</div>
<div class="code" style="left:0;top:751px">                                <span class="k">this</span>.<span class="f">inventory</span>[0] = <span class="k">null</span>;</div>
<div class="code" style="left:0;top:766px">                            }</div>
<div class="code" style="left:0;top:781px">                        }</div>
<div class="code" style="left:0;top:796px">                    }</div>
<div class="code" style="left:0;top:811px">                }</div>
<div class="code" style="left:0;top:826px">            }</div>
<div class="code" style="left:0;top:841px">        }</div>
<div class="code" style="left:0;top:856px">    }</div>
</div>
<div class="a" style="left:898px;top:152px;width:7px;height:15px;border:1px solid #c0c0c0;box-sizing:border-box"></div>
<div class="a" style="left:555px;top:947px;width:2px;height:15px;background:#000"></div>
<div class="sbv" style="left:1550px;top:107px;width:17px;height:877px"></div><div class="thv" style="left:1551px;top:155px;width:15px;height:146px"></div><svg class="a" style="left:1554px;top:224px" width="9" height="8" viewBox="0 0 9 8" ><path d="M0 0.500 h8 M0 2.500 h8 M0 4.500 h8 M0 6.500 h8" stroke="#5a5a5a" stroke-width="1" stroke-dasharray="8 0"/><path d="M0 1.500 h8 M0 3.500 h8 M0 5.500 h8" stroke="#fff" stroke-width="1"/></svg><svg class="a" style="left:1554px;top:113px" width="9" height="6" viewBox="0 0 9 6" ><path d="M0.500 5 L4.500 1 L8.500 5 Z" fill="#3a3a3a"/></svg><svg class="a" style="left:1554px;top:973px" width="9" height="6" viewBox="0 0 9 6" ><path d="M0.500 1 L4.500 5 L8.500 1 Z" fill="#3a3a3a"/></svg>
<div class="a" style="left:1567px;top:107px;width:13px;height:894px;background:#f8f8f8"></div>
<div class="sbh" style="left:490px;top:984px;width:1060px;height:17px"></div><div class="thh" style="left:508px;top:985px;width:854px;height:15px"></div><svg class="a" style="left:931px;top:988px" width="8" height="9" viewBox="0 0 8 9" ><path d="M0.500 0 v8 M2.500 0 v8 M4.500 0 v8 M6.500 0 v8" stroke="#5a5a5a" stroke-width="1"/><path d="M1.500 0 v8 M3.500 0 v8 M5.500 0 v8" stroke="#fff" stroke-width="1"/></svg><svg class="a" style="left:496px;top:988px" width="6" height="9" viewBox="0 0 6 9" ><path d="M5 0.500 L1 4.500 L5 8.500 Z" fill="#3a3a3a"/></svg><svg class="a" style="left:1539px;top:988px" width="6" height="9" viewBox="0 0 6 9" ><path d="M1 0.500 L5 4.500 L1 8.500 Z" fill="#3a3a3a"/></svg>
<div class="a" style="left:1550px;top:984px;width:17px;height:17px;background:#f0f0f0"></div>
<div class="panel" style="left:1597px;top:79px;width:285px;height:929px"></div>
<svg class="a" style="left:1597px;top:79px" width="100" height="26" viewBox="0 0 100 26" ><path d="M0.500 26 V6 Q0.500 0.500 6 0.500 H83 Q89.500 0.500 89.500 7 V26" fill="url(#tabg)" stroke="#dadde8" stroke-width="1"/></svg>
<svg class="a" style="left:1604px;top:84px" width="16" height="17" viewBox="0 0 16 17" ><rect x="0.500" y="1.500" width="5" height="5" fill="#cfe4f8" stroke="#1f6fb4" stroke-width="1"/><rect x="0.500" y="10.500" width="5" height="5" fill="#cfe4f8" stroke="#1f6fb4" stroke-width="1"/><path d="M7 4.500 h6 M7 13.500 h6" stroke="#1f6fb4" stroke-width="1"/><rect x="7.500" y="7.500" width="2" height="2" fill="#fff" stroke="#1f6fb4" stroke-width="1"/><path d="M11 8.500 h2" stroke="#1f6fb4" stroke-width="1"/></svg>
<div class="t" style="left:1622px;top:84px;letter-spacing:.2px">Outline</div>
<svg class="a" style="left:1669px;top:88px" width="11" height="11" viewBox="0 0 11 11" ><path d="M1 0.500 h2.500 l2 2.500 l2 -2.500 h2.500 v1.500 l-2.800 3.500 l2.800 3.500 v1.500 h-2.500 l-2 -2.500 l-2 2.500 h-2.500 v-1.500 l2.800 -3.500 l-2.800 -3.500 Z" fill="#fff" stroke="#4a4a4a" stroke-width=".9"/></svg>
<svg class="a" style="left:1834px;top:87px" width="12" height="6" viewBox="0 0 12 6" ><rect x="0.500" y="0.500" width="9" height="3" fill="#fff" stroke="#5a5a5a" stroke-width="1"/></svg>
<svg class="a" style="left:1857px;top:87px" width="12" height="12" viewBox="0 0 12 12" ><rect x="0.500" y="0.500" width="9" height="9" fill="#fff" stroke="#5a5a5a" stroke-width="1"/><path d="M0.500 2.500 h9" stroke="#5a5a5a" stroke-width="1"/></svg>
<svg class="a" style="left:1714px;top:111px" width="16" height="16" viewBox="0 0 16 16" ><rect x="1.500" y="1.500" width="9" height="9" fill="#eef3fc" stroke="#a8b8d8" stroke-width="1"/><rect x="4.500" y="4.500" width="9" height="9" fill="#f6f9ff" stroke="#8a9cc8" stroke-width="1"/><path d="M5.800 9 h6.500" stroke="#1a3a8a" stroke-width="1.200"/></svg>
<div class="a" style="left:1733px;top:108px;width:23px;height:20px;border:1px solid #6a6e78;border-radius:3px;box-sizing:border-box;background:linear-gradient(180deg,#f6f6f6,#e2e2e2)"></div>
<svg class="a" style="left:1735px;top:109px" width="20" height="18" viewBox="0 0 20 18" ><path d="M4.500 2 v11 M2 10.500 l2.500 3 l2.500 -3" stroke="#4a6a9a" stroke-width="1" fill="none"/><text x="10.500" y="8.700" font-family="Liberation Serif,serif" font-weight="bold" font-size="12.500" fill="#1a8a7a" text-anchor="middle">a</text><text x="15" y="16.800" font-family="Liberation Serif,serif" font-weight="bold" font-size="12.500" fill="#8a2a9a" text-anchor="middle">z</text></svg>
<svg class="a" style="left:1760px;top:109px" width="17" height="17" viewBox="0 0 17 17" ><circle cx="7.500" cy="9" r="4.800" fill="#3a9ae4" stroke="#9ad0f4" stroke-width=".8"/><circle cx="7.500" cy="9" r="2" fill="#d8ecfa"/><path d="M1 2.500 L14 15.500" stroke="#1a2a8a" stroke-width="1.300"/></svg>
<svg class="a" style="left:1783px;top:109px" width="17" height="17" viewBox="0 0 17 17" ><circle cx="7" cy="9" r="3.600" fill="#9aa2ac" stroke="#6a727c" stroke-width=".7"/><path d="M1 3 L13.500 15" stroke="#1a2a8a" stroke-width="1.300"/><text x="12.800" y="6.500" font-family="Liberation Sans,sans-serif" font-weight="bold" font-size="7" fill="#2a5aa8" text-anchor="middle">S</text></svg>
<svg class="a" style="left:1807px;top:112px" width="12" height="12" viewBox="0 0 12 12" ><circle cx="5.800" cy="6" r="4" fill="#7cc070" stroke="#2a9a4a" stroke-width="1"/></svg>
<svg class="a" style="left:1829px;top:109px" width="17" height="17" viewBox="0 0 17 17" ><circle cx="7" cy="9" r="3.600" fill="#9aa2ac" stroke="#6a727c" stroke-width=".7"/><path d="M1 3 L13.500 15" stroke="#1a2a8a" stroke-width="1.300"/><text x="12.800" y="6.500" font-family="Liberation Sans,sans-serif" font-weight="bold" font-size="7" fill="#2a5aa8" text-anchor="middle">L</text></svg>
<svg class="a" style="left:1859px;top:110px" width="12" height="8" viewBox="0 0 12 8" ><path d="M1 1.500 h9 l-4.500 4.500 Z" fill="#fff" stroke="#5a5a5a" stroke-width=".9"/></svg>
<div class="clip" style="left:1604px;top:129px;width:271px;height:855px">
<svg class="a" style="left:30px;top:1px" width="14" height="16" viewBox="0 0 14 16" ><rect x="1.500" y="3.500" width="10" height="10" fill="#c9c9a4" stroke="#8f8f6a" stroke-width="1.100"/><rect x="2.500" y="4.500" width="3.500" height="3.500" fill="#dcdcbc"/><rect x="7" y="4.500" width="3.500" height="3.500" fill="#dcdcbc"/><rect x="2.500" y="9" width="3.500" height="3.500" fill="#dcdcbc"/><rect x="7" y="9" width="3.500" height="3.500" fill="#dcdcbc"/><path d="M6.500 2 v13 M0 8.500 h13" stroke="#6f6f4c" stroke-width="1"/></svg>
<div class="t" style="left:55px;top:0px;letter-spacing:-0.107px;">democretes.blocks.machines.tiles</div>
<svg class="a" style="left:12px;top:25px" width="7" height="7" viewBox="0 0 7 7" ><path d="M5.500 0.800 V5.500 H0.800 Z" fill="#595959" stroke="#262626" stroke-width="1" stroke-linejoin="round"/></svg>
<svg class="a" style="left:28px;top:18px" width="16" height="16" viewBox="0 0 16 16" ><circle cx="7.500" cy="8" r="6.300" fill="#2f8f45" stroke="#a8d4b0" stroke-width=".8"/><circle cx="7.500" cy="8" r="5.900" fill="none" stroke="#1e7a34" stroke-width=".9"/><text x="7.500" y="11.700" font-family="Liberation Sans,sans-serif" font-weight="bold" font-size="10.500" fill="#fff" text-anchor="middle">C</text></svg>
<div class="t" style="left:55px;top:18px;letter-spacing:-0.327px;">TileTCProcessor</div>
<svg class="a" style="left:57px;top:41px" width="8" height="8" viewBox="0 0 8 8" ><circle cx="4" cy="4" r="2.300" fill="#fff" stroke="#2e8b57" stroke-width="1.500"/></svg>
<div class="t" style="left:80px;top:36px;letter-spacing:0.150px;">amount <span class="ty">: int</span></div>
<svg class="a" style="left:57px;top:59px" width="8" height="8" viewBox="0 0 8 8" ><circle cx="4" cy="4" r="2.300" fill="#fff" stroke="#2e8b57" stroke-width="1.500"/></svg>
<div class="t" style="left:80px;top:54px;letter-spacing:-0.159px;">aspect <span class="ty">: Aspect</span></div>
<svg class="a" style="left:57px;top:77px" width="8" height="8" viewBox="0 0 8 8" ><circle cx="4" cy="4" r="2.300" fill="#fff" stroke="#2e8b57" stroke-width="1.500"/></svg>
<div class="t" style="left:80px;top:72px;letter-spacing:0.022px;">facing <span class="ty">: byte</span></div>
<svg class="a" style="left:57px;top:95px" width="8" height="8" viewBox="0 0 8 8" ><circle cx="4" cy="4" r="2.300" fill="#fff" stroke="#2e8b57" stroke-width="1.500"/></svg>
<div class="t" style="left:80px;top:90px;letter-spacing:-0.010px;">inventory <span class="ty">: ItemStack[]</span></div>
<svg class="a" style="left:57px;top:113px" width="8" height="8" viewBox="0 0 8 8" ><circle cx="4" cy="4" r="2.300" fill="#fff" stroke="#2e8b57" stroke-width="1.500"/></svg>
<div class="t" style="left:80px;top:108px;letter-spacing:0.153px;">maxAmount <span class="ty">: int</span></div>
<svg class="a" style="left:57px;top:131px" width="8" height="8" viewBox="0 0 8 8" ><circle cx="4" cy="4" r="2.300" fill="#fff" stroke="#2e8b57" stroke-width="1.500"/></svg>
<div class="t" style="left:80px;top:126px;letter-spacing:-0.003px;">suction <span class="ty">: Aspect</span></div>
<svg class="a" style="left:56px;top:149px" width="10" height="10" viewBox="0 0 10 10" ><circle cx="5" cy="5" r="3.700" fill="#9ccb8c" stroke="#1f8a4c" stroke-width="1.100"/></svg>
<svg class="a" style="left:67px;top:153px" width="9" height="6" viewBox="0 0 9 6" ><path d="M1 4.500 L4.500 0.800 L8 4.500 Z" fill="#fff" stroke="#5a30c0" stroke-width=".9" stroke-linejoin="round"/></svg>
<div class="t" style="left:80px;top:144px;letter-spacing:0.018px;">addToContainer(Aspect, int) <span class="ty">: int</span></div>
<svg class="a" style="left:56px;top:167px" width="10" height="10" viewBox="0 0 10 10" ><circle cx="5" cy="5" r="3.700" fill="#9ccb8c" stroke="#1f8a4c" stroke-width="1.100"/></svg>
<svg class="a" style="left:67px;top:171px" width="9" height="6" viewBox="0 0 9 6" ><path d="M1 4.500 L4.500 0.800 L8 4.500 Z" fill="#fff" stroke="#5a30c0" stroke-width=".9" stroke-linejoin="round"/></svg>
<div class="t" style="left:80px;top:162px;letter-spacing:-0.047px;">addVis(Aspect, int) <span class="ty">: int</span></div>
<svg class="a" style="left:56px;top:185px" width="10" height="10" viewBox="0 0 10 10" ><circle cx="5" cy="5" r="3.700" fill="#9ccb8c" stroke="#1f8a4c" stroke-width="1.100"/></svg>
<svg class="a" style="left:67px;top:189px" width="9" height="6" viewBox="0 0 9 6" ><path d="M1 4.500 L4.500 0.800 L8 4.500 Z" fill="#fff" stroke="#5a30c0" stroke-width=".9" stroke-linejoin="round"/></svg>
<div class="t" style="left:80px;top:180px;letter-spacing:-0.025px;">canInputFrom(ForgeDirection) <span class="ty">: boolean</span></div>
<svg class="a" style="left:56px;top:203px" width="10" height="10" viewBox="0 0 10 10" ><circle cx="5" cy="5" r="3.700" fill="#9ccb8c" stroke="#1f8a4c" stroke-width="1.100"/></svg>
<svg class="a" style="left:67px;top:207px" width="9" height="6" viewBox="0 0 9 6" ><path d="M1 4.500 L4.500 0.800 L8 4.500 Z" fill="#fff" stroke="#5a30c0" stroke-width=".9" stroke-linejoin="round"/></svg>
<div class="t" style="left:80px;top:198px;letter-spacing:0.042px;">canOutputTo(ForgeDirection) <span class="ty">: boolean</span></div>
<svg class="a" style="left:56px;top:221px" width="10" height="10" viewBox="0 0 10 10" ><circle cx="5" cy="5" r="3.700" fill="#9ccb8c" stroke="#1f8a4c" stroke-width="1.100"/></svg>
<svg class="a" style="left:67px;top:225px" width="9" height="6" viewBox="0 0 9 6" ><path d="M1 4.500 L4.500 0.800 L8 4.500 Z" fill="#fff" stroke="#5a30c0" stroke-width=".9" stroke-linejoin="round"/></svg>
<div class="t" style="left:80px;top:216px;letter-spacing:-0.178px;">closeChest() <span class="ty">: void</span></div>
<svg class="a" style="left:56px;top:239px" width="10" height="10" viewBox="0 0 10 10" ><circle cx="5" cy="5" r="3.700" fill="#9ccb8c" stroke="#1f8a4c" stroke-width="1.100"/></svg>
<svg class="a" style="left:67px;top:243px" width="9" height="6" viewBox="0 0 9 6" ><path d="M1 4.500 L4.500 0.800 L8 4.500 Z" fill="#fff" stroke="#5a30c0" stroke-width=".9" stroke-linejoin="round"/></svg>
<div class="t" style="left:80px;top:234px;letter-spacing:-0.035px;">containerContains(Aspect) <span class="ty">: int</span></div>
<svg class="a" style="left:56px;top:257px" width="10" height="10" viewBox="0 0 10 10" ><circle cx="5" cy="5" r="3.700" fill="#9ccb8c" stroke="#1f8a4c" stroke-width="1.100"/></svg>
<svg class="a" style="left:67px;top:261px" width="9" height="6" viewBox="0 0 9 6" ><path d="M1 4.500 L4.500 0.800 L8 4.500 Z" fill="#fff" stroke="#5a30c0" stroke-width=".9" stroke-linejoin="round"/></svg>
<div class="t" style="left:80px;top:252px;letter-spacing:-0.188px;">decrStackSize(int, int) <span class="ty">: ItemStack</span></div>
<svg class="a" style="left:56px;top:275px" width="10" height="10" viewBox="0 0 10 10" ><circle cx="5" cy="5" r="3.700" fill="#9ccb8c" stroke="#1f8a4c" stroke-width="1.100"/></svg>
<svg class="a" style="left:67px;top:279px" width="9" height="6" viewBox="0 0 9 6" ><path d="M1 4.500 L4.500 0.800 L8 4.500 Z" fill="#fff" stroke="#5a30c0" stroke-width=".9" stroke-linejoin="round"/></svg>
<div class="t" style="left:80px;top:270px;letter-spacing:-0.085px;">doesContainerAccept(Aspect) <span class="ty">: boolean</span></div>
<svg class="a" style="left:56px;top:293px" width="10" height="10" viewBox="0 0 10 10" ><circle cx="5" cy="5" r="3.700" fill="#9ccb8c" stroke="#1f8a4c" stroke-width="1.100"/></svg>
<svg class="a" style="left:67px;top:297px" width="9" height="6" viewBox="0 0 9 6" ><path d="M1 4.500 L4.500 0.800 L8 4.500 Z" fill="#fff" stroke="#5a30c0" stroke-width=".9" stroke-linejoin="round"/></svg>
<div class="t" style="left:80px;top:288px;letter-spacing:-0.107px;">doesContainerContain(AspectList) <span class="ty">: boolean</span></div>
<svg class="a" style="left:56px;top:311px" width="10" height="10" viewBox="0 0 10 10" ><circle cx="5" cy="5" r="3.700" fill="#9ccb8c" stroke="#1f8a4c" stroke-width="1.100"/></svg>
<svg class="a" style="left:67px;top:315px" width="9" height="6" viewBox="0 0 9 6" ><path d="M1 4.500 L4.500 0.800 L8 4.500 Z" fill="#fff" stroke="#5a30c0" stroke-width=".9" stroke-linejoin="round"/></svg>
<div class="t" style="left:80px;top:306px;letter-spacing:-0.020px;">doesContainerContainAmount(Aspect, int) <span class="ty">: boolean</span></div>
<svg class="a" style="left:56px;top:330px" width="10" height="9" viewBox="0 0 10 9" ><path d="M1 8 L5 1 L9 8 Z" fill="#3a6aa8" stroke="#1f4f8f" stroke-width="1" stroke-linejoin="round"/></svg>
<div class="t" style="left:80px;top:324px;letter-spacing:0.127px;">fill() <span class="ty">: void</span></div>
<svg class="a" style="left:56px;top:347px" width="10" height="10" viewBox="0 0 10 10" ><circle cx="5" cy="5" r="3.700" fill="#9ccb8c" stroke="#1f8a4c" stroke-width="1.100"/></svg>
<svg class="a" style="left:67px;top:351px" width="9" height="6" viewBox="0 0 9 6" ><path d="M1 4.500 L4.500 0.800 L8 4.500 Z" fill="#fff" stroke="#5a30c0" stroke-width=".9" stroke-linejoin="round"/></svg>
<div class="t" style="left:80px;top:342px;letter-spacing:-0.122px;">getAspects() <span class="ty">: AspectList</span></div>
<svg class="a" style="left:56px;top:365px" width="10" height="10" viewBox="0 0 10 10" ><circle cx="5" cy="5" r="3.700" fill="#9ccb8c" stroke="#1f8a4c" stroke-width="1.100"/></svg>
<svg class="a" style="left:67px;top:369px" width="9" height="6" viewBox="0 0 9 6" ><path d="M1 4.500 L4.500 0.800 L8 4.500 Z" fill="#fff" stroke="#5a30c0" stroke-width=".9" stroke-linejoin="round"/></svg>
<div class="t" style="left:80px;top:360px;letter-spacing:-0.050px;">getEssentiaAmount(ForgeDirection) <span class="ty">: int</span></div>
<svg class="a" style="left:56px;top:383px" width="10" height="10" viewBox="0 0 10 10" ><circle cx="5" cy="5" r="3.700" fill="#9ccb8c" stroke="#1f8a4c" stroke-width="1.100"/></svg>
<svg class="a" style="left:67px;top:387px" width="9" height="6" viewBox="0 0 9 6" ><path d="M1 4.500 L4.500 0.800 L8 4.500 Z" fill="#fff" stroke="#5a30c0" stroke-width=".9" stroke-linejoin="round"/></svg>
<div class="t" style="left:80px;top:378px;letter-spacing:-0.136px;">getEssentiaType(ForgeDirection) <span class="ty">: Aspect</span></div>
<svg class="a" style="left:56px;top:401px" width="10" height="10" viewBox="0 0 10 10" ><circle cx="5" cy="5" r="3.700" fill="#9ccb8c" stroke="#1f8a4c" stroke-width="1.100"/></svg>
<svg class="a" style="left:67px;top:405px" width="9" height="6" viewBox="0 0 9 6" ><path d="M1 4.500 L4.500 0.800 L8 4.500 Z" fill="#fff" stroke="#5a30c0" stroke-width=".9" stroke-linejoin="round"/></svg>
<div class="t" style="left:80px;top:396px;letter-spacing:0.015px;">getInventoryStackLimit() <span class="ty">: int</span></div>
<svg class="a" style="left:56px;top:419px" width="10" height="10" viewBox="0 0 10 10" ><circle cx="5" cy="5" r="3.700" fill="#9ccb8c" stroke="#1f8a4c" stroke-width="1.100"/></svg>
<svg class="a" style="left:67px;top:423px" width="9" height="6" viewBox="0 0 9 6" ><path d="M1 4.500 L4.500 0.800 L8 4.500 Z" fill="#fff" stroke="#5a30c0" stroke-width=".9" stroke-linejoin="round"/></svg>
<div class="t" style="left:80px;top:414px;letter-spacing:-0.074px;">getInvName() <span class="ty">: String</span></div>
<svg class="a" style="left:56px;top:437px" width="10" height="10" viewBox="0 0 10 10" ><circle cx="5" cy="5" r="3.700" fill="#9ccb8c" stroke="#1f8a4c" stroke-width="1.100"/></svg>
<svg class="a" style="left:67px;top:441px" width="9" height="6" viewBox="0 0 9 6" ><path d="M1 4.500 L4.500 0.800 L8 4.500 Z" fill="#fff" stroke="#5a30c0" stroke-width=".9" stroke-linejoin="round"/></svg>
<div class="t" style="left:80px;top:432px;letter-spacing:0.158px;">getMinimumSuction() <span class="ty">: int</span></div>
<svg class="a" style="left:56px;top:456px" width="10" height="9" viewBox="0 0 10 9" ><path d="M1 8 L5 1 L9 8 Z" fill="#3a6aa8" stroke="#1f4f8f" stroke-width="1" stroke-linejoin="round"/></svg>
<div class="t" style="left:80px;top:450px;letter-spacing:-0.072px;">getOreEquivalencies(int, int) <span class="ty">: Item</span></div>
<svg class="a" style="left:56px;top:473px" width="10" height="10" viewBox="0 0 10 10" ><circle cx="5" cy="5" r="3.700" fill="#9ccb8c" stroke="#1f8a4c" stroke-width="1.100"/></svg>
<svg class="a" style="left:67px;top:477px" width="9" height="6" viewBox="0 0 9 6" ><path d="M1 4.500 L4.500 0.800 L8 4.500 Z" fill="#fff" stroke="#5a30c0" stroke-width=".9" stroke-linejoin="round"/></svg>
<div class="t" style="left:80px;top:468px;letter-spacing:-0.086px;">getSizeInventory() <span class="ty">: int</span></div>
<svg class="a" style="left:56px;top:491px" width="10" height="10" viewBox="0 0 10 10" ><circle cx="5" cy="5" r="3.700" fill="#9ccb8c" stroke="#1f8a4c" stroke-width="1.100"/></svg>
<svg class="a" style="left:67px;top:495px" width="9" height="6" viewBox="0 0 9 6" ><path d="M1 4.500 L4.500 0.800 L8 4.500 Z" fill="#fff" stroke="#5a30c0" stroke-width=".9" stroke-linejoin="round"/></svg>
<div class="t" style="left:80px;top:486px;letter-spacing:-0.126px;">getStackInSlot(int) <span class="ty">: ItemStack</span></div>
<svg class="a" style="left:56px;top:509px" width="10" height="10" viewBox="0 0 10 10" ><circle cx="5" cy="5" r="3.700" fill="#9ccb8c" stroke="#1f8a4c" stroke-width="1.100"/></svg>
<svg class="a" style="left:67px;top:513px" width="9" height="6" viewBox="0 0 9 6" ><path d="M1 4.500 L4.500 0.800 L8 4.500 Z" fill="#fff" stroke="#5a30c0" stroke-width=".9" stroke-linejoin="round"/></svg>
<div class="t" style="left:80px;top:504px;letter-spacing:-0.123px;">getStackInSlotOnClosing(int) <span class="ty">: ItemStack</span></div>
<svg class="a" style="left:56px;top:527px" width="10" height="10" viewBox="0 0 10 10" ><circle cx="5" cy="5" r="3.700" fill="#9ccb8c" stroke="#1f8a4c" stroke-width="1.100"/></svg>
<svg class="a" style="left:67px;top:531px" width="9" height="6" viewBox="0 0 9 6" ><path d="M1 4.500 L4.500 0.800 L8 4.500 Z" fill="#fff" stroke="#5a30c0" stroke-width=".9" stroke-linejoin="round"/></svg>
<div class="t" style="left:80px;top:522px;letter-spacing:0.054px;">getSuctionAmount(ForgeDirection) <span class="ty">: int</span></div>
<svg class="a" style="left:56px;top:545px" width="10" height="10" viewBox="0 0 10 10" ><circle cx="5" cy="5" r="3.700" fill="#9ccb8c" stroke="#1f8a4c" stroke-width="1.100"/></svg>
<svg class="a" style="left:67px;top:549px" width="9" height="6" viewBox="0 0 9 6" ><path d="M1 4.500 L4.500 0.800 L8 4.500 Z" fill="#fff" stroke="#5a30c0" stroke-width=".9" stroke-linejoin="round"/></svg>
<div class="t" style="left:80px;top:540px;letter-spacing:-0.037px;">getSuctionType(ForgeDirection) <span class="ty">: Aspect</span></div>
<svg class="a" style="left:56px;top:563px" width="10" height="10" viewBox="0 0 10 10" ><circle cx="5" cy="5" r="3.700" fill="#9ccb8c" stroke="#1f8a4c" stroke-width="1.100"/></svg>
<svg class="a" style="left:67px;top:567px" width="9" height="6" viewBox="0 0 9 6" ><path d="M1 4.500 L4.500 0.800 L8 4.500 Z" fill="#fff" stroke="#5a30c0" stroke-width=".9" stroke-linejoin="round"/></svg>
<div class="t" style="left:80px;top:558px;letter-spacing:-0.089px;">isConnectable(ForgeDirection) <span class="ty">: boolean</span></div>
<svg class="a" style="left:56px;top:581px" width="10" height="10" viewBox="0 0 10 10" ><circle cx="5" cy="5" r="3.700" fill="#9ccb8c" stroke="#1f8a4c" stroke-width="1.100"/></svg>
<svg class="a" style="left:67px;top:585px" width="9" height="6" viewBox="0 0 9 6" ><path d="M1 4.500 L4.500 0.800 L8 4.500 Z" fill="#fff" stroke="#5a30c0" stroke-width=".9" stroke-linejoin="round"/></svg>
<div class="t" style="left:80px;top:576px;letter-spacing:-0.120px;">isInvNameLocalized() <span class="ty">: boolean</span></div>
<svg class="a" style="left:56px;top:599px" width="10" height="10" viewBox="0 0 10 10" ><circle cx="5" cy="5" r="3.700" fill="#9ccb8c" stroke="#1f8a4c" stroke-width="1.100"/></svg>
<svg class="a" style="left:67px;top:603px" width="9" height="6" viewBox="0 0 9 6" ><path d="M1 4.500 L4.500 0.800 L8 4.500 Z" fill="#fff" stroke="#5a30c0" stroke-width=".9" stroke-linejoin="round"/></svg>
<div class="t" style="left:80px;top:594px;letter-spacing:-0.088px;">isItemValidForSlot(int, ItemStack) <span class="ty">: boolean</span></div>
<svg class="a" style="left:56px;top:617px" width="10" height="10" viewBox="0 0 10 10" ><circle cx="5" cy="5" r="3.700" fill="#9ccb8c" stroke="#1f8a4c" stroke-width="1.100"/></svg>
<svg class="a" style="left:67px;top:621px" width="9" height="6" viewBox="0 0 9 6" ><path d="M1 4.500 L4.500 0.800 L8 4.500 Z" fill="#fff" stroke="#5a30c0" stroke-width=".9" stroke-linejoin="round"/></svg>
<div class="t" style="left:80px;top:612px;letter-spacing:-0.231px;">isUseableByPlayer(EntityPlayer) <span class="ty">: boolean</span></div>
<svg class="a" style="left:56px;top:635px" width="10" height="10" viewBox="0 0 10 10" ><circle cx="5" cy="5" r="3.700" fill="#9ccb8c" stroke="#1f8a4c" stroke-width="1.100"/></svg>
<svg class="a" style="left:67px;top:639px" width="9" height="6" viewBox="0 0 9 6" ><path d="M1 4.500 L4.500 0.800 L8 4.500 Z" fill="#fff" stroke="#5a30c0" stroke-width=".9" stroke-linejoin="round"/></svg>
<div class="t" style="left:80px;top:630px;letter-spacing:-0.115px;">openChest() <span class="ty">: void</span></div>
<svg class="a" style="left:56px;top:653px" width="10" height="10" viewBox="0 0 10 10" ><circle cx="5" cy="5" r="3.700" fill="#9ccb8c" stroke="#1f8a4c" stroke-width="1.100"/></svg>
<svg class="a" style="left:67px;top:657px" width="9" height="6" viewBox="0 0 9 6" ><path d="M1 4.500 L4.500 0.800 L8 4.500 Z" fill="#3a8a5a" stroke="#5a30c0" stroke-width=".9" stroke-linejoin="round"/></svg>
<div class="t" style="left:80px;top:648px;letter-spacing:-0.067px;">readCustomNBT(NBTTagCompound) <span class="ty">: void</span></div>
<svg class="a" style="left:56px;top:671px" width="10" height="10" viewBox="0 0 10 10" ><circle cx="5" cy="5" r="3.700" fill="#9ccb8c" stroke="#1f8a4c" stroke-width="1.100"/></svg>
<svg class="a" style="left:67px;top:675px" width="9" height="6" viewBox="0 0 9 6" ><path d="M1 4.500 L4.500 0.800 L8 4.500 Z" fill="#fff" stroke="#5a30c0" stroke-width=".9" stroke-linejoin="round"/></svg>
<div class="t" style="left:80px;top:666px;letter-spacing:-0.101px;">renderExtendedTube() <span class="ty">: boolean</span></div>
<svg class="a" style="left:56px;top:689px" width="10" height="10" viewBox="0 0 10 10" ><circle cx="5" cy="5" r="3.700" fill="#9ccb8c" stroke="#1f8a4c" stroke-width="1.100"/></svg>
<svg class="a" style="left:67px;top:693px" width="9" height="6" viewBox="0 0 9 6" ><path d="M1 4.500 L4.500 0.800 L8 4.500 Z" fill="#fff" stroke="#5a30c0" stroke-width=".9" stroke-linejoin="round"/></svg>
<div class="t" style="left:80px;top:684px;letter-spacing:-0.140px;">setAspects(AspectList) <span class="ty">: void</span></div>
<svg class="a" style="left:56px;top:707px" width="10" height="10" viewBox="0 0 10 10" ><circle cx="5" cy="5" r="3.700" fill="#9ccb8c" stroke="#1f8a4c" stroke-width="1.100"/></svg>
<svg class="a" style="left:67px;top:711px" width="9" height="6" viewBox="0 0 9 6" ><path d="M1 4.500 L4.500 0.800 L8 4.500 Z" fill="#fff" stroke="#5a30c0" stroke-width=".9" stroke-linejoin="round"/></svg>
<div class="t" style="left:80px;top:702px;letter-spacing:-0.070px;">setInventorySlotContents(int, ItemStack) <span class="ty">: void</span></div>
<svg class="a" style="left:56px;top:725px" width="10" height="10" viewBox="0 0 10 10" ><circle cx="5" cy="5" r="3.700" fill="#9ccb8c" stroke="#1f8a4c" stroke-width="1.100"/></svg>
<svg class="a" style="left:67px;top:729px" width="9" height="6" viewBox="0 0 9 6" ><path d="M1 4.500 L4.500 0.800 L8 4.500 Z" fill="#fff" stroke="#5a30c0" stroke-width=".9" stroke-linejoin="round"/></svg>
<div class="t" style="left:80px;top:720px;letter-spacing:-0.036px;">setSuction(Aspect, int) <span class="ty">: void</span></div>
<svg class="a" style="left:56px;top:743px" width="10" height="10" viewBox="0 0 10 10" ><circle cx="5" cy="5" r="3.700" fill="#9ccb8c" stroke="#1f8a4c" stroke-width="1.100"/></svg>
<svg class="a" style="left:67px;top:747px" width="9" height="6" viewBox="0 0 9 6" ><path d="M1 4.500 L4.500 0.800 L8 4.500 Z" fill="#fff" stroke="#5a30c0" stroke-width=".9" stroke-linejoin="round"/></svg>
<div class="t" style="left:80px;top:738px;letter-spacing:-0.074px;">takeFromContainer(Aspect, int) <span class="ty">: boolean</span></div>
<svg class="a" style="left:56px;top:761px" width="10" height="10" viewBox="0 0 10 10" ><circle cx="5" cy="5" r="3.700" fill="#9ccb8c" stroke="#1f8a4c" stroke-width="1.100"/></svg>
<svg class="a" style="left:67px;top:765px" width="9" height="6" viewBox="0 0 9 6" ><path d="M1 4.500 L4.500 0.800 L8 4.500 Z" fill="#fff" stroke="#5a30c0" stroke-width=".9" stroke-linejoin="round"/></svg>
<div class="t" style="left:80px;top:756px;letter-spacing:-0.110px;">takeFromContainer(AspectList) <span class="ty">: boolean</span></div>
<svg class="a" style="left:56px;top:779px" width="10" height="10" viewBox="0 0 10 10" ><circle cx="5" cy="5" r="3.700" fill="#9ccb8c" stroke="#1f8a4c" stroke-width="1.100"/></svg>
<svg class="a" style="left:67px;top:783px" width="9" height="6" viewBox="0 0 9 6" ><path d="M1 4.500 L4.500 0.800 L8 4.500 Z" fill="#fff" stroke="#5a30c0" stroke-width=".9" stroke-linejoin="round"/></svg>
<div class="t" style="left:80px;top:774px;letter-spacing:-0.071px;">takeVis(Aspect, int) <span class="ty">: int</span></div>
<div class="sel" style="left:52px;top:792px;width:137px;height:18px"></div>
<svg class="a" style="left:56px;top:797px" width="10" height="10" viewBox="0 0 10 10" ><circle cx="5" cy="5" r="3.700" fill="#9ccb8c" stroke="#1f8a4c" stroke-width="1.100"/></svg>
<svg class="a" style="left:67px;top:801px" width="9" height="6" viewBox="0 0 9 6" ><path d="M1 4.500 L4.500 0.800 L8 4.500 Z" fill="#3a8a5a" stroke="#5a30c0" stroke-width=".9" stroke-linejoin="round"/></svg>
<div class="t" style="left:80px;top:792px;letter-spacing:0.013px;">updateEntity() : void</div>
<svg class="a" style="left:56px;top:815px" width="10" height="10" viewBox="0 0 10 10" ><circle cx="5" cy="5" r="3.700" fill="#9ccb8c" stroke="#1f8a4c" stroke-width="1.100"/></svg>
<svg class="a" style="left:67px;top:819px" width="9" height="6" viewBox="0 0 9 6" ><path d="M1 4.500 L4.500 0.800 L8 4.500 Z" fill="#3a8a5a" stroke="#5a30c0" stroke-width=".9" stroke-linejoin="round"/></svg>
<div class="t" style="left:80px;top:810px;letter-spacing:-0.020px;">writeCustomNBT(NBTTagCompound) <span class="ty">: void</span></div>
</div>
<div class="sbh" style="left:1604px;top:984px;width:271px;height:17px"></div><div class="thh" style="left:1622px;top:985px;width:176px;height:15px"></div><svg class="a" style="left:1706px;top:988px" width="8" height="9" viewBox="0 0 8 9" ><path d="M0.500 0 v8 M2.500 0 v8 M4.500 0 v8 M6.500 0 v8" stroke="#5a5a5a" stroke-width="1"/><path d="M1.500 0 v8 M3.500 0 v8 M5.500 0 v8" stroke="#fff" stroke-width="1"/></svg><svg class="a" style="left:1610px;top:988px" width="6" height="9" viewBox="0 0 6 9" ><path d="M5 0.500 L1 4.500 L5 8.500 Z" fill="#3a3a3a"/></svg><svg class="a" style="left:1864px;top:988px" width="6" height="9" viewBox="0 0 6 9" ><path d="M1 0.500 L5 4.500 L1 8.500 Z" fill="#3a3a3a"/></svg>
<div class="a" style="left:1888px;top:80px;width:31px;height:145px;border:1px solid #fff;border-radius:7px;box-sizing:border-box;background:#e6eaf8;box-shadow:0 0 0 1px #c4cadc"></div>
<div class="a" style="left:1888px;top:227px;width:31px;height:57px;border:1px solid #fff;border-radius:7px;box-sizing:border-box;background:#e6eaf8;box-shadow:0 0 0 1px #c4cadc"></div>
<svg class="a" style="left:1895px;top:85px" width="16" height="3" viewBox="0 0 16 3" ><rect x="0" y="0.500" width="2" height="1.500" fill="#9a9a9a"/><rect x="4" y="0.500" width="2" height="1.500" fill="#9a9a9a"/><rect x="8" y="0.500" width="2" height="1.500" fill="#9a9a9a"/><rect x="12" y="0.500" width="2" height="1.500" fill="#9a9a9a"/></svg>
<svg class="a" style="left:1898px;top:96px" width="12" height="10" viewBox="0 0 12 10" ><rect x="3.500" y="0.500" width="6" height="4" fill="#fff" stroke="#4a4a4a" stroke-width="1"/><path d="M3.500 1.500 h6" stroke="#4a4a4a"/><rect x="0.500" y="3.500" width="6" height="4" fill="#fff" stroke="#4a4a4a" stroke-width="1"/><path d="M0.500 4.500 h6" stroke="#4a4a4a"/></svg>
<svg class="a" style="left:1895px;top:114px" width="16" height="16" viewBox="0 0 16 16" ><rect x="5.500" y="1.500" width="9" height="12" fill="#f4f6fc" stroke="#8a9cc4" stroke-width=".9"/><circle cx="6.500" cy="4.500" r="3" fill="#e0394a"/><rect x="0.500" y="7.500" width="6" height="7" fill="#e0394a"/><path d="M1.800 9 l3.400 4 M5.200 9 l-3.400 4" stroke="#fff" stroke-width="1.200"/><path d="M11 3 v8 h-2 M11 11 h2.500" stroke="#5a6a9a" stroke-width="1" fill="none"/></svg>
<div class="t" style="left:1896px;top:135px;color:#2a5aa8;font-weight:bold;font-size:13px">@</div>
<svg class="a" style="left:1895px;top:157px" width="17" height="18" viewBox="0 0 17 18" ><path d="M1.500 1.500 H8.500 L11.500 4.500 V14.500 H1.500 Z" fill="#fffdf4" stroke="#b8923c" stroke-width="1"/><path d="M5 5 q-2 3.500 0 7 M6.500 7.500 h3 M6.500 10 h3" stroke="#2a5aa8" stroke-width=".9" fill="none"/><path d="M8.500 13 h4 v-2 l3.500 3.200 l-3.500 3.200 v-2 h-4 Z" fill="#fbd860" stroke="#b8861c" stroke-width=".8"/></svg>
<svg class="a" style="left:1894px;top:180px" width="18" height="16" viewBox="0 0 18 16" ><path d="M1.500 13 l6 -7 3.500 3 -6 6.500 Z" fill="#fbe9a0" stroke="#c89828" stroke-width=".7"/><path d="M6.500 7 l2.500 -3 4 3.200 -2.500 3 Z" fill="#9a948c" stroke="#6a645c" stroke-width=".6"/><path d="M9 4 l3.500 -3.500 4.500 1.200 -.5 3.500 -3.500 2.500 Z" fill="#f4c050" stroke="#b8802c" stroke-width=".7"/><circle cx="13.800" cy="2.800" r=".9" fill="#3050a0"/></svg>
<svg class="a" style="left:1895px;top:202px" width="16" height="16" viewBox="0 0 16 16" ><rect x="1.500" y="1.500" width="13" height="9" fill="#eaf2fc" stroke="#1f5fae" stroke-width="1.600"/><path d="M4.500 5 h7 M4.500 7.500 h4" stroke="#1f5fae" stroke-width="1"/><path d="M6 11 h4 v2 h2.500 v1.500 h-9 v-1.500 h2.500 Z" fill="#1f5fae"/></svg>
<svg class="a" style="left:1895px;top:232px" width="16" height="3" viewBox="0 0 16 3" ><rect x="0" y="0.500" width="2" height="1.500" fill="#9a9a9a"/><rect x="4" y="0.500" width="2" height="1.500" fill="#9a9a9a"/><rect x="8" y="0.500" width="2" height="1.500" fill="#9a9a9a"/><rect x="12" y="0.500" width="2" height="1.500" fill="#9a9a9a"/></svg>
<svg class="a" style="left:1898px;top:243px" width="12" height="10" viewBox="0 0 12 10" ><rect x="3.500" y="0.500" width="6" height="4" fill="#fff" stroke="#4a4a4a" stroke-width="1"/><path d="M3.500 1.500 h6" stroke="#4a4a4a"/><rect x="0.500" y="3.500" width="6" height="4" fill="#fff" stroke="#4a4a4a" stroke-width="1"/><path d="M0.500 4.500 h6" stroke="#4a4a4a"/></svg>
<svg class="a" style="left:1894px;top:259px" width="18" height="20" viewBox="0 0 18 20" ><path d="M2.500 4.500 h3 l1.500 -2 h4 l1.500 2 h3 v9 h-13 Z" fill="#fbe09a" stroke="#c89838" stroke-width=".9"/><ellipse cx="9" cy="7" rx="3.500" ry="1.400" fill="#fbe080" stroke="#c89820" stroke-width=".6"/><path d="M5.500 7 v6 h7 v-6" fill="#f4c840" stroke="#c89820" stroke-width=".6"/><rect x="1.500" y="11.500" width="12" height="7" fill="#f8f8f8" stroke="#a8a8a8" stroke-width=".8"/><text x="7.500" y="17.500" font-family="Liberation Sans,sans-serif" font-weight="bold" font-size="5.500" text-anchor="middle"><tspan fill="#404040">G</tspan><tspan fill="#c03030">I</tspan><tspan fill="#30a030">T</tspan></text></svg>
<div class="a" style="left:1337px;top:1014px;width:1px;height:22px;background:#a8aec0"></div><div class="a" style="left:1338px;top:1014px;width:1px;height:22px;background:#fff"></div>
<div class="a" style="left:1441px;top:1014px;width:1px;height:22px;background:#a8aec0"></div><div class="a" style="left:1442px;top:1014px;width:1px;height:22px;background:#fff"></div>
<div class="a" style="left:1539px;top:1014px;width:1px;height:22px;background:#a8aec0"></div><div class="a" style="left:1540px;top:1014px;width:1px;height:22px;background:#fff"></div>
<div class="t" style="left:1345px;top:1016px;color:#1a1a1a">Writable</div>
<div class="t" style="left:1449px;top:1016px;color:#1a1a1a;letter-spacing:-.2px">Smart Insert</div>
<div class="t" style="left:1546px;top:1016px;color:#1a1a1a;letter-spacing:-.2px">86 : 10</div>
<svg class="a" style="left:1634px;top:1019px" width="4" height="18" viewBox="0 0 4 18" ><rect x="1" y="1" width="1.500" height="1.500" fill="#7a8294"/><rect x="1" y="5" width="1.500" height="1.500" fill="#7a8294"/><rect x="1" y="9" width="1.500" height="1.500" fill="#7a8294"/><rect x="1" y="13" width="1.500" height="1.500" fill="#7a8294"/></svg>
<div class="a" style="left:0;top:1040px;width:1920px;height:40px;background:linear-gradient(180deg,#6a6a78 0,#2a2a34 2px,#14141c 6px,#0c0c12 50%,#08080e 100%)"></div>
<div class="a" style="left:430px;top:1041px;width:1300px;height:39px;background:linear-gradient(100deg,rgba(40,40,60,0) 0,rgba(50,50,70,.35) 30%,rgba(30,30,50,.1) 60%,rgba(40,40,60,0) 100%)"></div>
<svg class="a" style="left:6px;top:1040px" width="44" height="40" viewBox="0 0 44 40" ><defs><radialGradient id="orb" cx=".5" cy=".35" r=".7"><stop offset="0" stop-color="#7ab4e8"/><stop offset=".55" stop-color="#2a64b0"/><stop offset="1" stop-color="#0a2454"/></radialGradient></defs><circle cx="21" cy="20" r="18.800" fill="url(#orb)" stroke="#8ab8e0" stroke-width="1.200"/><ellipse cx="21" cy="11" rx="14" ry="8" fill="rgba(255,255,255,.25)"/><path d="M11 13 q4 -3 8.500 -1 l-1.800 7 q-4 -2 -8.500 1 Z" fill="#e8582c"/><path d="M21 12.500 q4 2 8.500 -1 l-1.800 7 q-4 3 -8.500 1 Z" fill="#7cc040"/><path d="M8.800 21.500 q4 -3 8.500 -1 l-1.800 7 q-4 -2 -8.500 1 Z" fill="#3a9ae0"/><path d="M18.800 21 q4 2 8.500 -1 l-1.800 7 q-4 3 -8.500 1 Z" fill="#f8c830"/></svg>
<svg class="a" style="left:74px;top:1045px" width="30" height="30" viewBox="0 0 30 30" ><circle cx="15" cy="15" r="13.800" fill="#4a96cc" stroke="#3a80b4" stroke-width="1"/><path d="M8 9 l3 2.500 h8 l3 -2.500 v8 q0 4.500 -7 4.500 q-7 0 -7 -4.500 Z" fill="#fff"/></svg>
<div class="a" style="left:122px;top:1041px;width:58px;height:38px;border:1px solid #70707c;border-radius:3px;box-sizing:border-box;background:linear-gradient(180deg,#4a4a54 0,#33333c 45%,#1a1a22 50%,#24242c 100%);box-shadow:0 0 0 1px #050508"></div>
<div class="a" style="left:184px;top:1041px;width:58px;height:38px;border:1px solid #70707c;border-radius:3px;box-sizing:border-box;background:linear-gradient(180deg,#4a4a54 0,#33333c 45%,#1a1a22 50%,#24242c 100%);box-shadow:0 0 0 1px #050508"></div>
<div class="a" style="left:246px;top:1041px;width:58px;height:38px;border:1px solid #f0dca0;border-radius:3px;box-sizing:border-box;background:linear-gradient(180deg,#e4cc84 0,#c8a850 45%,#a8842c 50%,#c4a048 100%);box-shadow:0 0 0 1px #050508"></div>
<div class="a" style="left:308px;top:1041px;width:58px;height:38px;border:1px solid #70707c;border-radius:3px;box-sizing:border-box;background:linear-gradient(180deg,#4a4a54 0,#33333c 45%,#1a1a22 50%,#24242c 100%);box-shadow:0 0 0 1px #050508"></div>
<div class="a" style="left:370px;top:1041px;width:58px;height:38px;border:1px solid #e8e8f0;border-radius:3px;box-sizing:border-box;background:linear-gradient(180deg,#d4d4dc 0,#a8a8b4 45%,#787886 50%,#a4a4b2 100%);box-shadow:0 0 0 1px #050508"></div>
<svg class="a" style="left:134px;top:1044px" width="34" height="30" viewBox="0 0 34 30" ><path d="M2 5 h10 l2 3 h16 v18 h-28 Z" fill="#f4d890" stroke="#c8a040" stroke-width="1"/><path d="M5 3 h9 l2 3 h14 v4 h-25 Z" fill="#f8e4a8" stroke="#c8a040" stroke-width=".8"/><rect x="4" y="4" width="3" height="2" fill="#40a840"/><rect x="12" y="5" width="3" height="2" fill="#d03030"/><rect x="20" y="6" width="3" height="2" fill="#3a7ad8"/><path d="M1.500 10 h29 v17 h-29 Z" fill="#f8e09c" stroke="#c8a040" stroke-width="1"/><path d="M7 27 v-7 q0 -2 2 -2 h14 q2 0 2 2 v7 h-4 v-5 h-10 v5 Z" fill="#8ac4ec" stroke="#4a8ac4" stroke-width="1"/></svg>
<svg class="a" style="left:198px;top:1045px" width="30" height="30" viewBox="0 0 30 30" ><circle cx="15" cy="15" r="14" fill="#e04030"/><path d="M15 15 L2.900 8 A14 14 0 0 0 8 27.100 Z" fill="#3aa84a"/><path d="M15 15 L8 27.100 A14 14 0 0 0 27.100 8 L15 8 Z" fill="#f8cc30"/><path d="M15 15 L27.100 8 A14 14 0 0 0 2.900 8 Z" fill="#e04030"/><circle cx="15" cy="15" r="6.500" fill="#fff"/><circle cx="15" cy="15" r="5.200" fill="#4a8ae8"/></svg>
<svg class="a" style="left:257px;top:1043px" width="36" height="34" viewBox="0 0 36 34" ><path d="M3.500 9 a7.500 7.500 0 0 1 10 -7 a12 12 0 0 1 16 13.500 a7.500 7.500 0 0 1 -9 10.500 a12 12 0 0 1 -16 -12 a7.500 7.500 0 0 1 -1 -5 Z" fill="#12a5ea"/><text x="16.500" y="23.500" font-family="Liberation Sans,sans-serif" font-weight="bold" font-size="23" fill="#fff" text-anchor="middle">S</text><circle cx="27.500" cy="27" r="5" fill="#f8a820" stroke="#fff" stroke-width=".8"/><text x="27.500" y="30" font-family="Liberation Sans,sans-serif" font-weight="bold" font-size="8" fill="#000" text-anchor="middle">1</text></svg>
<svg class="a" style="left:321px;top:1045px" width="32" height="30" viewBox="0 0 32 30" ><defs><linearGradient id="ox" x1="0" y1="0" x2="0" y2="1"><stop offset="0" stop-color="#fca820"/><stop offset=".5" stop-color="#f87c10"/><stop offset="1" stop-color="#e84808"/></linearGradient></defs><path d="M8.500 1.500 h15 l7 12.500 l-7 12.500 h-15 l-7 -12.500 Z" fill="url(#ox)" stroke="#d85008" stroke-width="1"/><path d="M9.500 4 h13 l5.800 10 l-5.800 10 h-13 l-5.800 -10 Z" fill="none" stroke="#120c08" stroke-width="2.400"/><path d="M10 5 l12 18 M22 5 l-12 18" stroke="#120c08" stroke-width="3"/></svg>
<svg class="a" style="left:383.5px;top:1043px" width="32" height="32" viewBox="0 0 32 32" ><defs><radialGradient id="eg2" cx=".45" cy=".3" r=".8"><stop offset="0" stop-color="#c8b4ec"/><stop offset=".5" stop-color="#7a58b8"/><stop offset="1" stop-color="#2c1a5a"/></radialGradient></defs><circle cx="16" cy="16" r="14.500" fill="url(#eg2)"/><rect x="3" y="12" width="26" height="1.800" fill="#ece4fa"/><rect x="2" y="15.500" width="28" height="1.800" fill="#ece4fa"/><rect x="2.500" y="19" width="27" height="1.800" fill="#dcd0f4"/></svg>
<svg class="a" style="left:1741px;top:1057px" width="10" height="7" viewBox="0 0 10 7" ><path d="M1 5.500 L5 1.500 L9 5.500 Z" fill="#fff"/></svg>
<svg class="a" style="left:1762px;top:1051px" width="18" height="18" viewBox="0 0 18 18" ><path d="M5 1 l4 2.600 l-4 2.600 l-4 -2.600 Z M13 1 l4 2.600 l-4 2.600 l-4 -2.600 Z M5 6.200 l4 2.600 l-4 2.600 l-4 -2.600 Z M13 6.200 l4 2.600 l-4 2.600 l-4 -2.600 Z M5 12 l4 -2.400 l4 2.400 l-4 2.600 Z" fill="#4aa4ec" stroke="#c8e4fc" stroke-width=".5"/><circle cx="13.500" cy="13.500" r="3.500" fill="#38b048" stroke="#fff" stroke-width=".6"/><path d="M11.800 13.500 l1.300 1.300 l2.300 -2.600" stroke="#fff" stroke-width="1" fill="none"/></svg>
<svg class="a" style="left:1786px;top:1052px" width="18" height="16" viewBox="0 0 18 16" ><path d="M1 5.500 h3 l4 -4 v13 l-4 -4 h-3 Z" fill="#e8e8ec" stroke="#fff" stroke-width=".6"/><path d="M10.500 5 q2 3 0 6 M12.500 3 q3.500 5 0 10 M14.500 1.500 q4.500 6.500 0 13" stroke="#e8e8ec" stroke-width="1" fill="none"/></svg>
<svg class="a" style="left:1810px;top:1052px" width="18" height="16" viewBox="0 0 18 16" ><rect x="4.500" y="2.500" width="11" height="8" fill="#1a1a24" stroke="#e8e8ec" stroke-width="1.300"/><path d="M7 14.500 h7 M10.500 11 v3" stroke="#e8e8ec" stroke-width="1.300"/><path d="M1.500 0.500 v9 h2" stroke="#e8e8ec" stroke-width="1.200" fill="none"/><rect x="0" y="0" width="3" height="2.500" fill="#e8e8ec"/></svg>
<div class="t" style="left:1835px;top:1044px;width:70px;text-align:center;color:#fff;letter-spacing:-.2px">5:42 PM</div>
<div class="t" style="left:1835px;top:1061px;width:70px;text-align:center;color:#fff;letter-spacing:-.2px">5/22/2014</div>
<div class="a" style="left:1906px;top:1041px;width:14px;height:39px;border-left:1px solid #5a5a66;background:linear-gradient(180deg,#3a3a44,#1a1a22 50%,#101016)"></div>
</body></html>
